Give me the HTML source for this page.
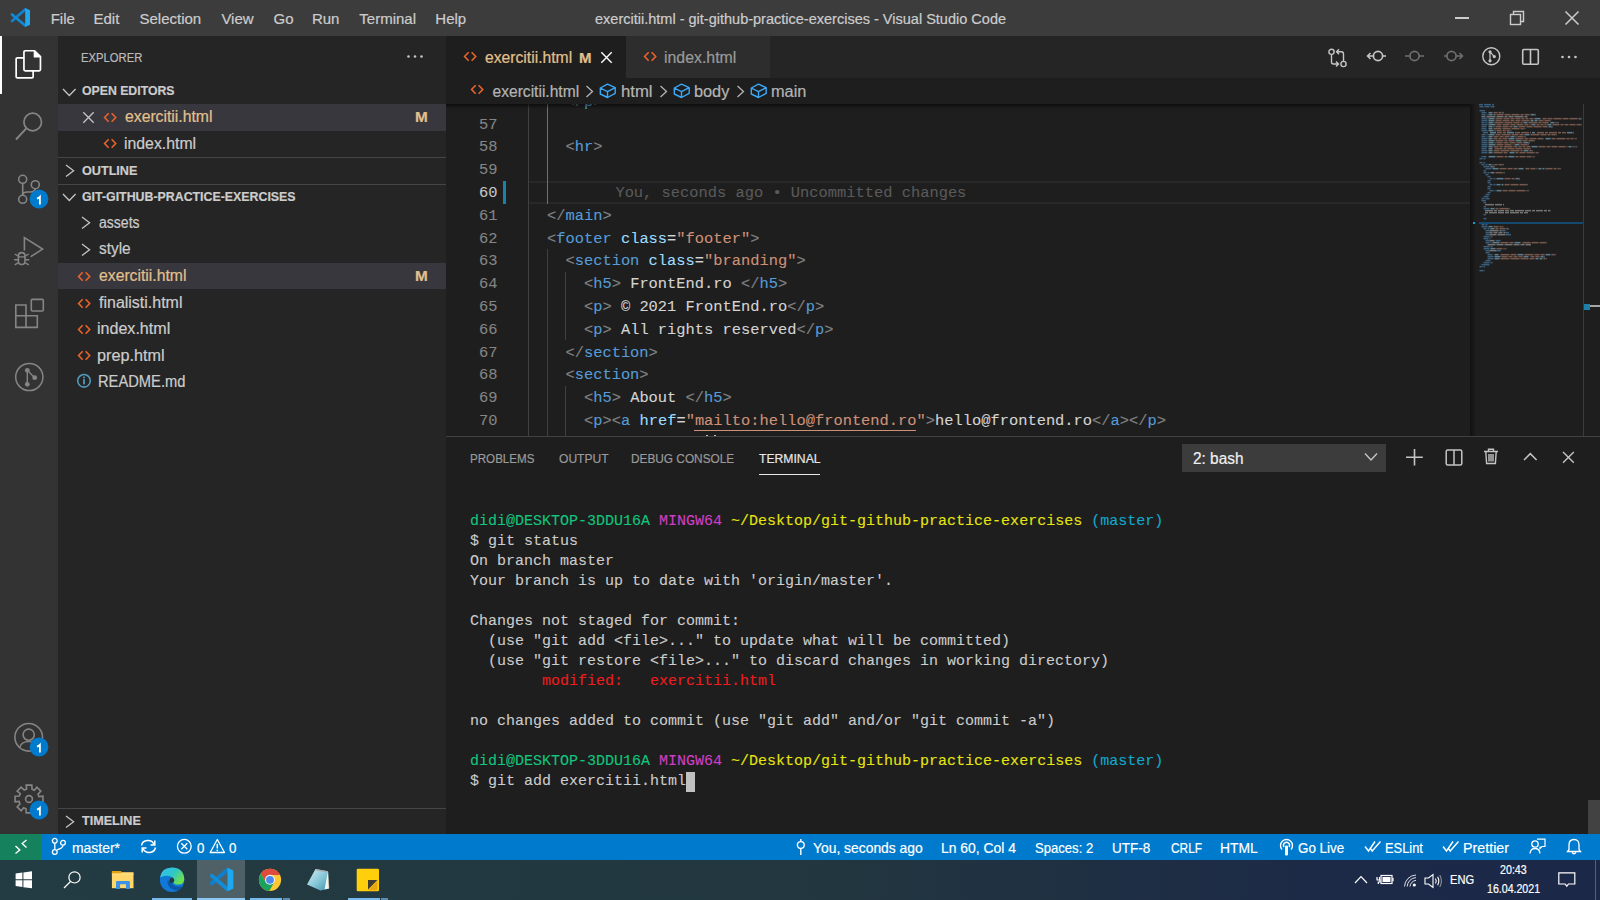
<!DOCTYPE html>
<html><head><meta charset="utf-8"><title>VS Code</title><style>
*{margin:0;padding:0;box-sizing:content-box}
html,body{width:1600px;height:900px;overflow:hidden;background:#1e1e1e}
.r,.t,.s,.cl,.tl,.clip{position:absolute}
.t{white-space:pre;-webkit-text-stroke:0.2px currentColor}
.clip{overflow:hidden}
.cl{font:400 15.4px/15.4px "Liberation Mono",monospace;white-space:pre;color:#d4d4d4;-webkit-text-stroke:0.1px currentColor}
.tl{font:400 15px/15px "Liberation Mono",monospace;white-space:pre;color:#cccccc;-webkit-text-stroke:0.1px currentColor}
svg.s{overflow:visible}
</style></head>
<body>
<div class="r" style="left:0px;top:0px;width:1600px;height:36px;background:#3c3c3c;"></div>
<svg class="s" style="left:5px;top:3px;" width="32" height="30" viewBox="0 0 32 30">
<path d="M7 18 L20.2 6.5" stroke="#1183d0" stroke-width="2.7" stroke-linecap="round"/>
<path d="M7 11.5 L20.2 22.5" stroke="#0e8ad8" stroke-width="2.7" stroke-linecap="round"/>
<path d="M20.2 5 L25 7.2 L25 21.8 L20.2 24 Z" fill="#1ea8f0"/>
</svg>
<div class="r" style="left:1455px;top:17px;width:14px;height:1.5px;background:#cccccc;"></div>
<svg class="s" style="left:1509px;top:10px;" width="17" height="16" viewBox="0 0 17 16"><rect x="1.5" y="4.5" width="10" height="10" fill="none" stroke="#cccccc" stroke-width="1.4"/><path d="M4.5 4.5 V1.5 H14.5 V11.5 H11.5" fill="none" stroke="#cccccc" stroke-width="1.4"/></svg>
<svg class="s" style="left:1564px;top:10px;" width="16" height="16" viewBox="0 0 16 16"><path d="M1.5 1.5 L14.5 14.5 M14.5 1.5 L1.5 14.5" stroke="#cccccc" stroke-width="1.5"/></svg>
<div class="r" style="left:0px;top:36px;width:58px;height:798px;background:#333333;"></div>
<div class="r" style="left:0px;top:36px;width:2px;height:58px;background:#ffffff;"></div>
<svg class="s" style="left:13px;top:48px;" width="32" height="34" viewBox="0 0 32 34">
<path d="M10.95 9.85 H4.4 Q3.15 9.85 3.15 11.1 V28.7 Q3.15 29.95 4.4 29.95 H18.9 Q20.15 29.95 20.15 28.7 V22.85" fill="none" stroke="#ffffff" stroke-width="1.7"/>
<path d="M12.2 2.75 H21.5 L27.45 8.7 V21.6 Q27.45 22.85 26.2 22.85 H12.2 Q10.95 22.85 10.95 21.6 V4 Q10.95 2.75 12.2 2.75 Z" fill="none" stroke="#ffffff" stroke-width="1.7"/>
<path d="M21.3 2.75 V8.9 H27.45 Z" fill="#ffffff" stroke="#ffffff" stroke-width="1.2" stroke-linejoin="round"/>
</svg>
<svg class="s" style="left:13px;top:108px;" width="34" height="36" viewBox="0 0 34 36"><circle cx="19.7" cy="14" r="8.8" fill="none" stroke="#858585" stroke-width="1.7"/>
<path d="M13.3 20.3 L3 31.5" stroke="#858585" stroke-width="1.9"/></svg>
<svg class="s" style="left:14px;top:170px;" width="36" height="40" viewBox="0 0 36 40"><circle cx="8.7" cy="9.3" r="4" fill="none" stroke="#858585" stroke-width="1.6"/>
<circle cx="21.3" cy="14.7" r="4" fill="none" stroke="#858585" stroke-width="1.6"/>
<circle cx="8.7" cy="29.3" r="4" fill="none" stroke="#858585" stroke-width="1.6"/>
<path d="M8.7 13.3 V25.3 M8.7 25 Q9.2 22 13 22 H16.5 Q20.5 22 21.3 18.7" fill="none" stroke="#858585" stroke-width="1.6"/></svg>
<svg class="s" style="left:28.700000000000003px;top:189.3px;" width="20" height="20" viewBox="0 0 20 20"><circle cx="10" cy="10" r="9.4" fill="#007acc"/><path d="M8 9.7 Q9.9 9 10.9 7.9 V15.4" fill="none" stroke="#ffffff" stroke-width="1.8"/></svg>
<svg class="s" style="left:12px;top:234px;" width="36" height="34" viewBox="0 0 36 34"><path d="M12.4 16.4 V3.6 L30.6 15.1 L18.7 22.7" fill="none" stroke="#858585" stroke-width="1.6" stroke-linejoin="miter"/>
<rect x="6.4" y="18.6" width="6.6" height="11.9" rx="3.3" fill="none" stroke="#858585" stroke-width="1.6"/>
<path d="M6.4 22.9 H13 M2.7 20 L6 21.9 M16.7 20 L13.4 21.9 M2.2 25.8 H6 M17.2 25.8 H13.4 M2.7 30.8 L6 28.9 M16.7 30.8 L13.4 28.9" stroke="#858585" stroke-width="1.4"/></svg>
<svg class="s" style="left:12px;top:296px;" width="36" height="36" viewBox="0 0 36 36"><path d="M3.8 9 H14 V19.7 H3.8 Z M3.8 19.7 H14 V31.4 H3.8 Z M14 19.7 H25.3 V31.4 H14 Z" fill="none" stroke="#858585" stroke-width="1.6"/>
<rect x="19.3" y="3.4" width="12" height="11.6" rx="1" fill="none" stroke="#858585" stroke-width="1.6"/></svg>
<svg class="s" style="left:13px;top:361px;" width="32" height="32" viewBox="0 0 32 32"><circle cx="16.3" cy="16" r="13.6" fill="none" stroke="#858585" stroke-width="1.5"/>
<circle cx="14.3" cy="9.3" r="2.4" fill="#858585"/><circle cx="21.7" cy="16.7" r="2.4" fill="#858585"/><circle cx="14.3" cy="23.3" r="2.4" fill="#858585"/>
<path d="M14.3 9.3 V23.3 M14.3 9.3 L21.7 16.7" stroke="#858585" stroke-width="1.4"/></svg>
<svg class="s" style="left:13px;top:721px;" width="32" height="32" viewBox="0 0 32 32"><circle cx="15.7" cy="16.3" r="13.8" fill="none" stroke="#858585" stroke-width="1.6"/>
<circle cx="15.7" cy="13.7" r="5.6" fill="none" stroke="#858585" stroke-width="1.6"/>
<path d="M6.5 26.5 Q8.5 20.5 15.7 20.5 Q22.9 20.5 24.9 26.5" fill="none" stroke="#858585" stroke-width="1.6"/></svg>
<svg class="s" style="left:28.700000000000003px;top:737.3px;" width="20" height="20" viewBox="0 0 20 20"><circle cx="10" cy="10" r="9.4" fill="#007acc"/><path d="M8 9.7 Q9.9 9 10.9 7.9 V15.4" fill="none" stroke="#ffffff" stroke-width="1.8"/></svg>
<svg class="s" style="left:12.7px;top:783.3px;" width="32" height="32" viewBox="0 0 32 32"><path d="M29.92 13.18 L29.92 18.82 L25.74 19.01 L24.70 21.33 L27.84 23.85 L23.85 27.84 L20.76 25.02 L18.38 25.92 L18.82 29.92 L13.18 29.92 L12.99 25.74 L10.67 24.70 L8.15 27.84 L4.16 23.85 L6.98 20.76 L6.08 18.38 L2.08 18.82 L2.08 13.18 L6.26 12.99 L7.30 10.67 L4.16 8.15 L8.15 4.16 L11.24 6.98 L13.62 6.08 L13.18 2.08 L18.82 2.08 L19.01 6.26 L21.33 7.30 L23.85 4.16 L27.84 8.15 L25.02 11.24 L25.92 13.62Z" fill="none" stroke="#858585" stroke-width="1.6"/><circle cx="16" cy="16" r="3.4" fill="none" stroke="#858585" stroke-width="1.6"/></svg>
<svg class="s" style="left:28.700000000000003px;top:800px;" width="20" height="20" viewBox="0 0 20 20"><circle cx="10" cy="10" r="9.4" fill="#007acc"/><path d="M8 9.7 Q9.9 9 10.9 7.9 V15.4" fill="none" stroke="#ffffff" stroke-width="1.8"/></svg>
<div class="r" style="left:58px;top:36px;width:388px;height:798px;background:#252526;"></div>
<svg class="s" style="left:405px;top:54px;" width="20" height="6" viewBox="0 0 20 6"><circle cx="3.5" cy="2.5" r="1.3" fill="#c5c5c5"/><circle cx="10" cy="2.5" r="1.3" fill="#c5c5c5"/><circle cx="16.5" cy="2.5" r="1.3" fill="#c5c5c5"/></svg>
<svg class="s" style="left:62px;top:87.5px;" width="14.6" height="8.5" viewBox="0 0 14.6 8.5"><path d="M1 1 L7.30 7.50 L13.60 1" fill="none" stroke="#c5c5c5" stroke-width="1.3"/></svg>
<div class="r" style="left:58px;top:104.2px;width:388px;height:26.4px;background:#37373d;"></div>
<svg class="s" style="left:82px;top:110.5px;" width="13" height="13" viewBox="0 0 13 13"><path d="M1.3 1.3 L11.7 11.7 M11.7 1.3 L1.3 11.7" stroke="#c5c5c5" stroke-width="1.3"/></svg>
<svg class="s" style="left:102.8px;top:111.8px;" width="14.3" height="11" viewBox="0 0 14.3 11"><path d="M5.67 1.3 L1.6 5.50 L5.67 9.70 M8.63 1.3 L12.70 5.50 L8.63 9.70" fill="none" stroke="#e8632b" stroke-width="1.6"/></svg>
<svg class="s" style="left:102.8px;top:138.2px;" width="14.3" height="11" viewBox="0 0 14.3 11"><path d="M5.67 1.3 L1.6 5.50 L5.67 9.70 M8.63 1.3 L12.70 5.50 L8.63 9.70" fill="none" stroke="#e8632b" stroke-width="1.6"/></svg>
<div class="r" style="left:58px;top:157.2px;width:388px;height:1px;background:#454545;"></div>
<svg class="s" style="left:65px;top:164px;" width="9.6" height="13.5" viewBox="0 0 9.6 13.5"><path d="M1 1 L8.60 6.75 L1 12.50" fill="none" stroke="#c5c5c5" stroke-width="1.3"/></svg>
<div class="r" style="left:58px;top:183.8px;width:388px;height:1px;background:#454545;"></div>
<svg class="s" style="left:62px;top:193.4px;" width="14.6" height="8.5" viewBox="0 0 14.6 8.5"><path d="M1 1 L7.30 7.50 L13.60 1" fill="none" stroke="#c5c5c5" stroke-width="1.3"/></svg>
<div class="r" style="left:58px;top:263px;width:388px;height:26.2px;background:#37373d;"></div>
<svg class="s" style="left:81.4px;top:216.3px;" width="9.6" height="13.5" viewBox="0 0 9.6 13.5"><path d="M1 1 L8.60 6.75 L1 12.50" fill="none" stroke="#c5c5c5" stroke-width="1.3"/></svg>
<svg class="s" style="left:81.4px;top:242.7px;" width="9.6" height="13.5" viewBox="0 0 9.6 13.5"><path d="M1 1 L8.60 6.75 L1 12.50" fill="none" stroke="#c5c5c5" stroke-width="1.3"/></svg>
<svg class="s" style="left:76.6px;top:270.8px;" width="14.3" height="11" viewBox="0 0 14.3 11"><path d="M5.67 1.3 L1.6 5.50 L5.67 9.70 M8.63 1.3 L12.70 5.50 L8.63 9.70" fill="none" stroke="#e8632b" stroke-width="1.6"/></svg>
<svg class="s" style="left:76.6px;top:297.5px;" width="14.3" height="11" viewBox="0 0 14.3 11"><path d="M5.67 1.3 L1.6 5.50 L5.67 9.70 M8.63 1.3 L12.70 5.50 L8.63 9.70" fill="none" stroke="#e8632b" stroke-width="1.6"/></svg>
<svg class="s" style="left:76.6px;top:323.8px;" width="14.3" height="11" viewBox="0 0 14.3 11"><path d="M5.67 1.3 L1.6 5.50 L5.67 9.70 M8.63 1.3 L12.70 5.50 L8.63 9.70" fill="none" stroke="#e8632b" stroke-width="1.6"/></svg>
<svg class="s" style="left:76.6px;top:350.3px;" width="14.3" height="11" viewBox="0 0 14.3 11"><path d="M5.67 1.3 L1.6 5.50 L5.67 9.70 M8.63 1.3 L12.70 5.50 L8.63 9.70" fill="none" stroke="#e8632b" stroke-width="1.6"/></svg>
<svg class="s" style="left:75.5px;top:373.3px;" width="16" height="16" viewBox="0 0 16 16"><circle cx="8" cy="7.8" r="6.3" fill="none" stroke="#519aba" stroke-width="1.6"/><rect x="7.1" y="6.2" width="1.8" height="5.2" fill="#519aba"/><rect x="7.1" y="3.6" width="1.8" height="1.7" fill="#519aba"/></svg>
<div class="r" style="left:58px;top:808px;width:388px;height:1px;background:#454545;"></div>
<svg class="s" style="left:65px;top:814.6px;" width="9.6" height="13.5" viewBox="0 0 9.6 13.5"><path d="M1 1 L8.60 6.75 L1 12.50" fill="none" stroke="#c5c5c5" stroke-width="1.3"/></svg>
<div class="r" style="left:446px;top:36px;width:1154px;height:42px;background:#252526;"></div>
<div class="r" style="left:446px;top:36px;width:179.5px;height:42px;background:#1e1e1e;"></div>
<div class="r" style="left:625.5px;top:36px;width:144.5px;height:42px;background:#2d2d2d;"></div>
<svg class="s" style="left:463px;top:51.3px;" width="14.3" height="11" viewBox="0 0 14.3 11"><path d="M5.67 1.3 L1.6 5.50 L5.67 9.70 M8.63 1.3 L12.70 5.50 L8.63 9.70" fill="none" stroke="#e8632b" stroke-width="1.6"/></svg>
<svg class="s" style="left:599.5px;top:51px;" width="13" height="13" viewBox="0 0 13 13"><path d="M1.3 1.3 L11.7 11.7 M11.7 1.3 L1.3 11.7" stroke="#ffffff" stroke-width="1.4"/></svg>
<svg class="s" style="left:642.5px;top:51.3px;" width="14.3" height="11" viewBox="0 0 14.3 11"><path d="M5.67 1.3 L1.6 5.50 L5.67 9.70 M8.63 1.3 L12.70 5.50 L8.63 9.70" fill="none" stroke="#e8632b" stroke-width="1.6"/></svg>
<svg class="s" style="left:1327px;top:47px;" width="22" height="22" viewBox="0 0 22 22"><circle cx="4.5" cy="4.8" r="2.6" fill="none" stroke="#c5c5c5" stroke-width="1.4"/>
<circle cx="16.5" cy="17" r="2.6" fill="none" stroke="#c5c5c5" stroke-width="1.4"/>
<path d="M4.5 7.4 V15 Q4.5 17 6.5 17 H11 M9 14.5 L11.5 17 L9 19.5" fill="none" stroke="#c5c5c5" stroke-width="1.4"/>
<path d="M16.5 14.4 V7 Q16.5 4.8 14.5 4.8 H10 M12 2.3 L9.5 4.8 L12 7.3" fill="none" stroke="#c5c5c5" stroke-width="1.4"/></svg>
<svg class="s" style="left:1366px;top:47px;" width="22" height="18" viewBox="0 0 22 18"><circle cx="12" cy="9" r="4.6" fill="none" stroke="#c5c5c5" stroke-width="1.7"/><path d="M16.6 9 H20 M7.4 9 H1.5 M4.5 6 L1.5 9 L4.5 12" fill="none" stroke="#c5c5c5" stroke-width="1.5"/></svg>
<svg class="s" style="left:1404px;top:47px;" width="22" height="18" viewBox="0 0 22 18"><circle cx="10.5" cy="9" r="4.6" fill="none" stroke="#6f6f6f" stroke-width="1.7"/><path d="M15.1 9 H20 M5.9 9 H1" fill="none" stroke="#6f6f6f" stroke-width="1.5"/></svg>
<svg class="s" style="left:1443px;top:47px;" width="22" height="18" viewBox="0 0 22 18"><circle cx="8.5" cy="9" r="4.6" fill="none" stroke="#6f6f6f" stroke-width="1.7"/><path d="M13.1 9 H19.5 M3.9 9 H1 M16.5 6 L19.5 9 L16.5 12" fill="none" stroke="#6f6f6f" stroke-width="1.5"/></svg>
<svg class="s" style="left:1481px;top:46px;" width="21" height="21" viewBox="0 0 21 21"><circle cx="10.3" cy="10.3" r="8.5" fill="none" stroke="#c5c5c5" stroke-width="1.4"/>
<circle cx="9" cy="5.8" r="1.6" fill="#c5c5c5"/><circle cx="13.3" cy="10.6" r="1.6" fill="#c5c5c5"/><circle cx="9" cy="14.8" r="1.6" fill="#c5c5c5"/>
<path d="M9 5.8 V14.8 M9 5.8 L13.3 10.6" stroke="#c5c5c5" stroke-width="1.2"/></svg>
<svg class="s" style="left:1521px;top:48px;" width="19" height="18" viewBox="0 0 19 18"><rect x="1.7" y="1.5" width="15.6" height="14.8" rx="1.2" fill="none" stroke="#c5c5c5" stroke-width="1.6"/><path d="M9.5 1.5 V16.3" stroke="#c5c5c5" stroke-width="1.6"/></svg>
<svg class="s" style="left:1559px;top:54px;" width="20" height="6" viewBox="0 0 20 6"><circle cx="3.5" cy="3" r="1.3" fill="#c5c5c5"/><circle cx="10" cy="3" r="1.3" fill="#c5c5c5"/><circle cx="16.5" cy="3" r="1.3" fill="#c5c5c5"/></svg>
<div class="r" style="left:446px;top:78px;width:1154px;height:26px;background:#1e1e1e;"></div>
<svg class="s" style="left:469.8px;top:84.3px;" width="14.3" height="11" viewBox="0 0 14.3 11"><path d="M5.67 1.3 L1.6 5.50 L5.67 9.70 M8.63 1.3 L12.70 5.50 L8.63 9.70" fill="none" stroke="#e8632b" stroke-width="1.6"/></svg>
<svg class="s" style="left:585px;top:84.8px;" width="10" height="13" viewBox="0 0 10 13"><path d="M1.5 1 L7.5 6.5 L1.5 12" fill="none" stroke="#b4b4b4" stroke-width="1.3"/></svg>
<svg class="s" style="left:599px;top:82.5px;" width="18" height="16" viewBox="0 0 18 16"><path d="M8.5 1.2 L16.2 4.6 L16.2 10.4 L8.5 14.5 L1.3 11 L1.3 5 Z M1.3 5 L8.5 8.7 L16.2 4.6 M8.5 8.7 V14.5" fill="none" stroke="#3aa8f8" stroke-width="1.4" stroke-linejoin="round"/></svg>
<svg class="s" style="left:659px;top:84.8px;" width="10" height="13" viewBox="0 0 10 13"><path d="M1.5 1 L7.5 6.5 L1.5 12" fill="none" stroke="#b4b4b4" stroke-width="1.3"/></svg>
<svg class="s" style="left:672.5px;top:82.5px;" width="18" height="16" viewBox="0 0 18 16"><path d="M8.5 1.2 L16.2 4.6 L16.2 10.4 L8.5 14.5 L1.3 11 L1.3 5 Z M1.3 5 L8.5 8.7 L16.2 4.6 M8.5 8.7 V14.5" fill="none" stroke="#3aa8f8" stroke-width="1.4" stroke-linejoin="round"/></svg>
<svg class="s" style="left:736px;top:84.8px;" width="10" height="13" viewBox="0 0 10 13"><path d="M1.5 1 L7.5 6.5 L1.5 12" fill="none" stroke="#b4b4b4" stroke-width="1.3"/></svg>
<svg class="s" style="left:749.5px;top:82.5px;" width="18" height="16" viewBox="0 0 18 16"><path d="M8.5 1.2 L16.2 4.6 L16.2 10.4 L8.5 14.5 L1.3 11 L1.3 5 Z M1.3 5 L8.5 8.7 L16.2 4.6 M8.5 8.7 V14.5" fill="none" stroke="#3aa8f8" stroke-width="1.4" stroke-linejoin="round"/></svg>
<div class="r" style="left:446px;top:104px;width:1137px;height:332px;background:#1e1e1e;"></div>
<div class="r" style="left:528.5px;top:180.8px;width:941.5px;height:22.8px;background:transparent;box-sizing:border-box;border-top:2px solid #282828;border-bottom:2px solid #282828;"></div>
<div class="r" style="left:528.0px;top:104px;width:1px;height:332px;background:#404040;"></div>
<div class="r" style="left:546.5px;top:104px;width:1px;height:99.6px;background:#707070;"></div>
<div class="r" style="left:546.5px;top:249.20000000000002px;width:1px;height:186.8px;background:#404040;"></div>
<div class="r" style="left:565.0px;top:272.0px;width:1px;height:68.4px;background:#404040;"></div>
<div class="r" style="left:565.0px;top:386.0px;width:1px;height:50.0px;background:#404040;"></div>
<div class="r" style="left:503px;top:180.8px;width:3.3px;height:22.8px;background:#1b81a8;"></div>
<div class="clip" style="left:446px;top:104px;width:1024px;height:332px;"><div style="position:absolute;left:-446px;top:-104px;width:1600px;height:900px"><div class="cl" style="left:528.5px;top:94.70px"><span style="color:#d4d4d4">    </span><span style="color:#808080">&lt;/</span><span style="color:#569cd6">p</span><span style="color:#808080">&gt;</span></div>
<div class="cl" style="left:479.12px;top:117.50px;color:#858585">57</div>
<div class="cl" style="left:479.12px;top:140.30px;color:#858585">58</div>
<div class="cl" style="left:528.5px;top:140.30px"><span style="color:#d4d4d4">    </span><span style="color:#808080">&lt;</span><span style="color:#569cd6">hr</span><span style="color:#808080">&gt;</span></div>
<div class="cl" style="left:479.12px;top:163.10px;color:#858585">59</div>
<div class="cl" style="left:479.12px;top:185.90px;color:#c6c6c6">60</div>
<div class="cl" style="left:479.12px;top:208.70px;color:#858585">61</div>
<div class="cl" style="left:528.5px;top:208.70px"><span style="color:#d4d4d4">  </span><span style="color:#808080">&lt;/</span><span style="color:#569cd6">main</span><span style="color:#808080">&gt;</span></div>
<div class="cl" style="left:479.12px;top:231.50px;color:#858585">62</div>
<div class="cl" style="left:528.5px;top:231.50px"><span style="color:#d4d4d4">  </span><span style="color:#808080">&lt;</span><span style="color:#569cd6">footer</span><span style="color:#d4d4d4"> </span><span style="color:#9cdcfe">class</span><span style="color:#d4d4d4">=</span><span style="color:#ce9178">&quot;footer&quot;</span><span style="color:#808080">&gt;</span></div>
<div class="cl" style="left:479.12px;top:254.30px;color:#858585">63</div>
<div class="cl" style="left:528.5px;top:254.30px"><span style="color:#d4d4d4">    </span><span style="color:#808080">&lt;</span><span style="color:#569cd6">section</span><span style="color:#d4d4d4"> </span><span style="color:#9cdcfe">class</span><span style="color:#d4d4d4">=</span><span style="color:#ce9178">&quot;branding&quot;</span><span style="color:#808080">&gt;</span></div>
<div class="cl" style="left:479.12px;top:277.10px;color:#858585">64</div>
<div class="cl" style="left:528.5px;top:277.10px"><span style="color:#d4d4d4">      </span><span style="color:#808080">&lt;</span><span style="color:#569cd6">h5</span><span style="color:#808080">&gt;</span><span style="color:#d4d4d4"> FrontEnd.ro </span><span style="color:#808080">&lt;/</span><span style="color:#569cd6">h5</span><span style="color:#808080">&gt;</span></div>
<div class="cl" style="left:479.12px;top:299.90px;color:#858585">65</div>
<div class="cl" style="left:528.5px;top:299.90px"><span style="color:#d4d4d4">      </span><span style="color:#808080">&lt;</span><span style="color:#569cd6">p</span><span style="color:#808080">&gt;</span><span style="color:#d4d4d4"> © 2021 FrontEnd.ro</span><span style="color:#808080">&lt;/</span><span style="color:#569cd6">p</span><span style="color:#808080">&gt;</span></div>
<div class="cl" style="left:479.12px;top:322.70px;color:#858585">66</div>
<div class="cl" style="left:528.5px;top:322.70px"><span style="color:#d4d4d4">      </span><span style="color:#808080">&lt;</span><span style="color:#569cd6">p</span><span style="color:#808080">&gt;</span><span style="color:#d4d4d4"> All rights reserved</span><span style="color:#808080">&lt;/</span><span style="color:#569cd6">p</span><span style="color:#808080">&gt;</span></div>
<div class="cl" style="left:479.12px;top:345.50px;color:#858585">67</div>
<div class="cl" style="left:528.5px;top:345.50px"><span style="color:#d4d4d4">    </span><span style="color:#808080">&lt;/</span><span style="color:#569cd6">section</span><span style="color:#808080">&gt;</span></div>
<div class="cl" style="left:479.12px;top:368.30px;color:#858585">68</div>
<div class="cl" style="left:528.5px;top:368.30px"><span style="color:#d4d4d4">    </span><span style="color:#808080">&lt;</span><span style="color:#569cd6">section</span><span style="color:#808080">&gt;</span></div>
<div class="cl" style="left:479.12px;top:391.10px;color:#858585">69</div>
<div class="cl" style="left:528.5px;top:391.10px"><span style="color:#d4d4d4">      </span><span style="color:#808080">&lt;</span><span style="color:#569cd6">h5</span><span style="color:#808080">&gt;</span><span style="color:#d4d4d4"> About </span><span style="color:#808080">&lt;/</span><span style="color:#569cd6">h5</span><span style="color:#808080">&gt;</span></div>
<div class="cl" style="left:479.12px;top:413.90px;color:#858585">70</div>
<div class="cl" style="left:528.5px;top:413.90px"><span style="color:#d4d4d4">      </span><span style="color:#808080">&lt;</span><span style="color:#569cd6">p</span><span style="color:#808080">&gt;</span><span style="color:#808080">&lt;</span><span style="color:#569cd6">a</span><span style="color:#d4d4d4"> </span><span style="color:#9cdcfe">href</span><span style="color:#d4d4d4">=</span><span style="color:#ce9178">&quot;</span><span style="color:#ce9178">mailto:hello@frontend.ro</span><span style="color:#ce9178">&quot;</span><span style="color:#808080">&gt;</span><span style="color:#d4d4d4">hello@frontend.ro</span><span style="color:#808080">&lt;/</span><span style="color:#569cd6">a</span><span style="color:#808080">&gt;</span><span style="color:#808080">&lt;/</span><span style="color:#569cd6">p</span><span style="color:#808080">&gt;</span></div>
<div class="cl" style="left:479.12px;top:436.70px;color:#858585">71</div>
<div class="cl" style="left:615.4px;top:185.90px;color:#5a5a5a">You, seconds ago • Uncommitted changes</div><div class="r" style="left:693.8px;top:430px;width:222.2px;height:1px;background:#ce9178"></div><div class="r" style="left:706px;top:434.5px;width:1.6px;height:2px;background:#bdbdbd"></div><div class="r" style="left:714px;top:434.5px;width:1.6px;height:2px;background:#bdbdbd"></div></div></div>
<div class="r" style="left:446px;top:104px;width:1137px;height:5px;background:linear-gradient(rgba(0,0,0,0.55),rgba(0,0,0,0));"></div>
<div class="r" style="left:1470px;top:104px;width:113px;height:332px;background:#1e1e1e;"></div>
<div class="r" style="left:1470px;top:104px;width:6px;height:332px;background:linear-gradient(90deg,rgba(0,0,0,0.45),rgba(0,0,0,0));"></div>
<div class="r" style="left:1478.5px;top:221.8px;width:104.5px;height:2px;background:#124a70;"></div>
<svg class="s" style="left:1470px;top:104px" width="113" height="180" viewBox="0 0 113 180"><g opacity="0.5"><rect x="9.0" y="-0.1" width="4.0" height="1.5" fill="#569cd6"/><rect x="14.0" y="-0.1" width="7.0" height="1.5" fill="#569cd6"/><rect x="22.0" y="-0.1" width="2.0" height="1.5" fill="#569cd6"/><rect x="9.5" y="1.9" width="4.0" height="1.5" fill="#569cd6"/><rect x="14.5" y="1.9" width="5.0" height="1.5" fill="#569cd6"/><rect x="20.5" y="1.9" width="4.0" height="1.5" fill="#569cd6"/><rect x="9.5" y="5.9" width="5.5" height="1.5" fill="#569cd6"/><rect x="11.5" y="7.9" width="5.0" height="1.5" fill="#569cd6"/><rect x="18.5" y="7.9" width="4.0" height="1.5" fill="#9cdcfe"/><rect x="23.5" y="7.9" width="4.0" height="1.5" fill="#ce9178"/><rect x="28.5" y="7.9" width="3.0" height="1.5" fill="#ce9178"/><rect x="32.5" y="7.9" width="1.5" height="1.5" fill="#9cdcfe"/><rect x="32.0" y="7.9" width="2.0" height="1.5" fill="#808080"/><rect x="11.5" y="9.9" width="4.0" height="1.5" fill="#569cd6"/><rect x="16.5" y="9.9" width="1.0" height="1.5" fill="#569cd6"/><rect x="18.5" y="9.9" width="4.0" height="1.5" fill="#9cdcfe"/><rect x="23.5" y="9.9" width="2.0" height="1.5" fill="#9cdcfe"/><rect x="26.5" y="9.9" width="7.0" height="1.5" fill="#ce9178"/><rect x="34.5" y="9.9" width="6.0" height="1.5" fill="#ce9178"/><rect x="41.5" y="9.9" width="8.0" height="1.5" fill="#ce9178"/><rect x="50.5" y="9.9" width="3.0" height="1.5" fill="#ce9178"/><rect x="54.5" y="9.9" width="5.0" height="1.5" fill="#ce9178"/><rect x="60.5" y="9.9" width="5.0" height="1.5" fill="#9cdcfe"/><rect x="64.0" y="9.9" width="2.0" height="1.5" fill="#808080"/><rect x="11.5" y="11.9" width="4.0" height="1.5" fill="#c8c8c8"/><rect x="16.5" y="11.9" width="9.0" height="1.5" fill="#c8c8c8"/><rect x="26.5" y="11.9" width="7.0" height="1.5" fill="#c8c8c8"/><rect x="34.5" y="11.9" width="3.0" height="1.5" fill="#c8c8c8"/><rect x="38.5" y="11.9" width="5.0" height="1.5" fill="#c8c8c8"/><rect x="44.5" y="11.9" width="9.0" height="1.5" fill="#c8c8c8"/><rect x="54.5" y="11.9" width="3.0" height="1.5" fill="#c8c8c8"/><rect x="11.5" y="13.9" width="6.0" height="1.5" fill="#569cd6"/><rect x="18.5" y="13.9" width="6.0" height="1.5" fill="#9cdcfe"/><rect x="25.5" y="13.9" width="7.0" height="1.5" fill="#ce9178"/><rect x="33.5" y="13.9" width="6.0" height="1.5" fill="#ce9178"/><rect x="40.5" y="13.9" width="4.0" height="1.5" fill="#ce9178"/><rect x="45.5" y="13.9" width="5.0" height="1.5" fill="#ce9178"/><rect x="51.5" y="13.9" width="3.0" height="1.5" fill="#ce9178"/><rect x="55.5" y="13.9" width="3.0" height="1.5" fill="#ce9178"/><rect x="59.5" y="13.9" width="4.0" height="1.5" fill="#ce9178"/><rect x="64.5" y="13.9" width="6.0" height="1.5" fill="#9cdcfe"/><rect x="72.5" y="13.9" width="4.0" height="1.5" fill="#ce9178"/><rect x="77.5" y="13.9" width="5.0" height="1.5" fill="#ce9178"/><rect x="83.5" y="13.9" width="8.0" height="1.5" fill="#ce9178"/><rect x="92.5" y="13.9" width="6.0" height="1.5" fill="#ce9178"/><rect x="99.5" y="13.9" width="8.0" height="1.5" fill="#ce9178"/><rect x="108.5" y="13.9" width="3.0" height="1.5" fill="#9cdcfe"/><rect x="109.5" y="13.9" width="2.0" height="1.5" fill="#808080"/><rect x="11.5" y="15.9" width="6.0" height="1.5" fill="#569cd6"/><rect x="18.5" y="15.9" width="6.0" height="1.5" fill="#9cdcfe"/><rect x="25.5" y="15.9" width="6.0" height="1.5" fill="#ce9178"/><rect x="32.5" y="15.9" width="7.0" height="1.5" fill="#ce9178"/><rect x="40.5" y="15.9" width="4.0" height="1.5" fill="#ce9178"/><rect x="45.5" y="15.9" width="5.0" height="1.5" fill="#ce9178"/><rect x="51.5" y="15.9" width="8.0" height="1.5" fill="#ce9178"/><rect x="60.5" y="15.9" width="3.0" height="1.5" fill="#9cdcfe"/><rect x="64.5" y="15.9" width="3.0" height="1.5" fill="#9cdcfe"/><rect x="68.5" y="15.9" width="5.0" height="1.5" fill="#ce9178"/><rect x="74.5" y="15.9" width="4.5" height="1.5" fill="#ce9178"/><rect x="79.0" y="15.9" width="2.0" height="1.5" fill="#808080"/><rect x="11.5" y="17.9" width="3.0" height="1.5" fill="#569cd6"/><rect x="15.5" y="17.9" width="2.0" height="1.5" fill="#569cd6"/><rect x="18.5" y="17.9" width="5.0" height="1.5" fill="#9cdcfe"/><rect x="24.5" y="17.9" width="9.0" height="1.5" fill="#ce9178"/><rect x="34.5" y="17.9" width="8.0" height="1.5" fill="#ce9178"/><rect x="43.5" y="17.9" width="6.0" height="1.5" fill="#ce9178"/><rect x="50.5" y="17.9" width="2.0" height="1.5" fill="#ce9178"/><rect x="53.5" y="17.9" width="4.0" height="1.5" fill="#9cdcfe"/><rect x="58.5" y="17.9" width="9.0" height="1.5" fill="#ce9178"/><rect x="68.5" y="17.9" width="3.0" height="1.5" fill="#ce9178"/><rect x="72.5" y="17.9" width="6.0" height="1.5" fill="#ce9178"/><rect x="80.5" y="17.9" width="4.0" height="1.5" fill="#9cdcfe"/><rect x="85.5" y="17.9" width="1.0" height="1.5" fill="#9cdcfe"/><rect x="87.0" y="17.9" width="2.0" height="1.5" fill="#808080"/><rect x="11.5" y="19.9" width="6.0" height="1.5" fill="#569cd6"/><rect x="18.5" y="19.9" width="7.0" height="1.5" fill="#9cdcfe"/><rect x="26.5" y="19.9" width="5.0" height="1.5" fill="#ce9178"/><rect x="32.5" y="19.9" width="7.0" height="1.5" fill="#ce9178"/><rect x="40.5" y="19.9" width="5.0" height="1.5" fill="#ce9178"/><rect x="46.5" y="19.9" width="7.0" height="1.5" fill="#ce9178"/><rect x="54.5" y="19.9" width="4.0" height="1.5" fill="#ce9178"/><rect x="59.5" y="19.9" width="1.0" height="1.5" fill="#ce9178"/><rect x="61.5" y="19.9" width="4.0" height="1.5" fill="#9cdcfe"/><rect x="66.5" y="19.9" width="3.0" height="1.5" fill="#ce9178"/><rect x="70.5" y="19.9" width="3.0" height="1.5" fill="#ce9178"/><rect x="74.5" y="19.9" width="2.0" height="1.5" fill="#ce9178"/><rect x="77.5" y="19.9" width="4.0" height="1.5" fill="#9cdcfe"/><rect x="82.5" y="19.9" width="7.0" height="1.5" fill="#ce9178"/><rect x="90.5" y="19.9" width="3.0" height="1.5" fill="#ce9178"/><rect x="94.5" y="19.9" width="4.0" height="1.5" fill="#ce9178"/><rect x="99.5" y="19.9" width="6.0" height="1.5" fill="#ce9178"/><rect x="106.5" y="19.9" width="3.5" height="1.5" fill="#ce9178"/><rect x="110.0" y="19.9" width="2.0" height="1.5" fill="#808080"/><rect x="11.5" y="21.9" width="5.0" height="1.5" fill="#569cd6"/><rect x="18.5" y="21.9" width="4.0" height="1.5" fill="#9cdcfe"/><rect x="23.5" y="21.9" width="1.0" height="1.5" fill="#9cdcfe"/><rect x="25.5" y="21.9" width="6.0" height="1.5" fill="#ce9178"/><rect x="32.5" y="21.9" width="6.0" height="1.5" fill="#ce9178"/><rect x="39.5" y="21.9" width="3.0" height="1.5" fill="#ce9178"/><rect x="43.5" y="21.9" width="4.0" height="1.5" fill="#9cdcfe"/><rect x="48.5" y="21.9" width="7.0" height="1.5" fill="#ce9178"/><rect x="56.5" y="21.9" width="6.0" height="1.5" fill="#ce9178"/><rect x="63.5" y="21.9" width="8.0" height="1.5" fill="#ce9178"/><rect x="72.5" y="21.9" width="5.0" height="1.5" fill="#ce9178"/><rect x="78.5" y="21.9" width="4.0" height="1.5" fill="#9cdcfe"/><rect x="80.5" y="21.9" width="2.0" height="1.5" fill="#808080"/><rect x="11.5" y="23.9" width="5.0" height="1.5" fill="#569cd6"/><rect x="18.5" y="23.9" width="4.0" height="1.5" fill="#9cdcfe"/><rect x="23.5" y="23.9" width="8.0" height="1.5" fill="#ce9178"/><rect x="32.5" y="23.9" width="8.0" height="1.5" fill="#ce9178"/><rect x="41.5" y="23.9" width="8.0" height="1.5" fill="#ce9178"/><rect x="50.5" y="23.9" width="3.0" height="1.5" fill="#ce9178"/><rect x="53.5" y="23.9" width="2.0" height="1.5" fill="#808080"/><rect x="11.5" y="25.9" width="6.0" height="1.5" fill="#569cd6"/><rect x="18.5" y="25.9" width="5.0" height="1.5" fill="#9cdcfe"/><rect x="24.5" y="25.9" width="1.0" height="1.5" fill="#9cdcfe"/><rect x="26.5" y="25.9" width="5.0" height="1.5" fill="#ce9178"/><rect x="32.5" y="25.9" width="3.0" height="1.5" fill="#ce9178"/><rect x="36.5" y="25.9" width="3.0" height="1.5" fill="#ce9178"/><rect x="39.5" y="25.9" width="2.0" height="1.5" fill="#808080"/><rect x="13.0" y="27.9" width="5.0" height="1.5" fill="#569cd6"/><rect x="20.0" y="27.9" width="6.0" height="1.5" fill="#9cdcfe"/><rect x="27.0" y="27.9" width="5.0" height="1.5" fill="#ce9178"/><rect x="33.0" y="27.9" width="3.0" height="1.5" fill="#ce9178"/><rect x="37.0" y="27.9" width="7.0" height="1.5" fill="#9cdcfe"/><rect x="45.0" y="27.9" width="5.0" height="1.5" fill="#ce9178"/><rect x="51.0" y="27.9" width="8.0" height="1.5" fill="#ce9178"/><rect x="60.0" y="27.9" width="1.0" height="1.5" fill="#ce9178"/><rect x="62.0" y="27.9" width="3.0" height="1.5" fill="#9cdcfe"/><rect x="67.0" y="27.9" width="7.0" height="1.5" fill="#ce9178"/><rect x="75.0" y="27.9" width="3.0" height="1.5" fill="#ce9178"/><rect x="79.0" y="27.9" width="8.0" height="1.5" fill="#ce9178"/><rect x="88.0" y="27.9" width="3.0" height="1.5" fill="#ce9178"/><rect x="92.0" y="27.9" width="4.0" height="1.5" fill="#ce9178"/><rect x="97.0" y="27.9" width="5.0" height="1.5" fill="#9cdcfe"/><rect x="103.0" y="27.9" width="1.0" height="1.5" fill="#9cdcfe"/><rect x="102.0" y="27.9" width="2.0" height="1.5" fill="#808080"/><rect x="11.5" y="29.9" width="4.0" height="1.5" fill="#569cd6"/><rect x="16.5" y="29.9" width="1.0" height="1.5" fill="#569cd6"/><rect x="18.5" y="29.9" width="6.0" height="1.5" fill="#9cdcfe"/><rect x="25.5" y="29.9" width="5.0" height="1.5" fill="#ce9178"/><rect x="31.5" y="29.9" width="9.0" height="1.5" fill="#ce9178"/><rect x="41.5" y="29.9" width="7.0" height="1.5" fill="#ce9178"/><rect x="49.5" y="29.9" width="4.0" height="1.5" fill="#ce9178"/><rect x="54.5" y="29.9" width="5.0" height="1.5" fill="#9cdcfe"/><rect x="60.5" y="29.9" width="9.0" height="1.5" fill="#ce9178"/><rect x="70.5" y="29.9" width="6.0" height="1.5" fill="#ce9178"/><rect x="77.5" y="29.9" width="3.0" height="1.5" fill="#ce9178"/><rect x="81.5" y="29.9" width="3.5" height="1.5" fill="#ce9178"/><rect x="85.0" y="29.9" width="2.0" height="1.5" fill="#808080"/><rect x="11.5" y="31.9" width="4.0" height="1.5" fill="#569cd6"/><rect x="16.5" y="31.9" width="1.0" height="1.5" fill="#569cd6"/><rect x="18.5" y="31.9" width="4.0" height="1.5" fill="#9cdcfe"/><rect x="23.5" y="31.9" width="5.0" height="1.5" fill="#ce9178"/><rect x="29.5" y="31.9" width="4.0" height="1.5" fill="#ce9178"/><rect x="34.5" y="31.9" width="5.0" height="1.5" fill="#ce9178"/><rect x="40.5" y="31.9" width="4.0" height="1.5" fill="#9cdcfe"/><rect x="45.5" y="31.9" width="1.0" height="1.5" fill="#9cdcfe"/><rect x="47.5" y="31.9" width="6.0" height="1.5" fill="#ce9178"/><rect x="54.0" y="31.9" width="2.0" height="1.5" fill="#808080"/><rect x="11.5" y="33.9" width="6.0" height="1.5" fill="#569cd6"/><rect x="18.5" y="33.9" width="4.0" height="1.5" fill="#9cdcfe"/><rect x="23.5" y="33.9" width="4.0" height="1.5" fill="#ce9178"/><rect x="28.5" y="33.9" width="3.0" height="1.5" fill="#ce9178"/><rect x="32.5" y="33.9" width="5.0" height="1.5" fill="#ce9178"/><rect x="38.5" y="33.9" width="6.0" height="1.5" fill="#9cdcfe"/><rect x="45.5" y="33.9" width="8.0" height="1.5" fill="#ce9178"/><rect x="54.5" y="33.9" width="4.0" height="1.5" fill="#ce9178"/><rect x="59.5" y="33.9" width="7.0" height="1.5" fill="#ce9178"/><rect x="67.5" y="33.9" width="6.0" height="1.5" fill="#ce9178"/><rect x="75.5" y="33.9" width="5.0" height="1.5" fill="#9cdcfe"/><rect x="81.5" y="33.9" width="4.0" height="1.5" fill="#ce9178"/><rect x="86.5" y="33.9" width="9.0" height="1.5" fill="#ce9178"/><rect x="96.5" y="33.9" width="3.0" height="1.5" fill="#ce9178"/><rect x="100.5" y="33.9" width="3.0" height="1.5" fill="#ce9178"/><rect x="104.5" y="33.9" width="0.5" height="1.5" fill="#ce9178"/><rect x="105.0" y="33.9" width="2.0" height="1.5" fill="#808080"/><rect x="11.5" y="35.9" width="6.0" height="1.5" fill="#569cd6"/><rect x="18.5" y="35.9" width="6.0" height="1.5" fill="#9cdcfe"/><rect x="25.5" y="35.9" width="8.0" height="1.5" fill="#ce9178"/><rect x="34.5" y="35.9" width="3.0" height="1.5" fill="#ce9178"/><rect x="38.5" y="35.9" width="6.0" height="1.5" fill="#ce9178"/><rect x="45.5" y="35.9" width="6.0" height="1.5" fill="#9cdcfe"/><rect x="52.5" y="35.9" width="5.0" height="1.5" fill="#ce9178"/><rect x="58.5" y="35.9" width="4.5" height="1.5" fill="#ce9178"/><rect x="63.0" y="35.9" width="2.0" height="1.5" fill="#808080"/><rect x="11.5" y="37.9" width="6.0" height="1.5" fill="#569cd6"/><rect x="18.5" y="37.9" width="5.0" height="1.5" fill="#9cdcfe"/><rect x="24.5" y="37.9" width="1.0" height="1.5" fill="#9cdcfe"/><rect x="26.5" y="37.9" width="6.0" height="1.5" fill="#ce9178"/><rect x="33.5" y="37.9" width="5.0" height="1.5" fill="#ce9178"/><rect x="39.5" y="37.9" width="6.0" height="1.5" fill="#ce9178"/><rect x="46.5" y="37.9" width="6.0" height="1.5" fill="#ce9178"/><rect x="53.5" y="37.9" width="6.0" height="1.5" fill="#9cdcfe"/><rect x="58.0" y="37.9" width="2.0" height="1.5" fill="#808080"/><rect x="11.5" y="39.9" width="6.0" height="1.5" fill="#569cd6"/><rect x="18.5" y="39.9" width="7.0" height="1.5" fill="#9cdcfe"/><rect x="26.5" y="39.9" width="7.0" height="1.5" fill="#ce9178"/><rect x="34.5" y="39.9" width="7.0" height="1.5" fill="#ce9178"/><rect x="42.5" y="39.9" width="1.0" height="1.5" fill="#ce9178"/><rect x="44.5" y="39.9" width="5.0" height="1.5" fill="#9cdcfe"/><rect x="50.5" y="39.9" width="6.5" height="1.5" fill="#ce9178"/><rect x="57.0" y="39.9" width="2.0" height="1.5" fill="#808080"/><rect x="11.5" y="41.9" width="6.0" height="1.5" fill="#569cd6"/><rect x="18.5" y="41.9" width="4.0" height="1.5" fill="#9cdcfe"/><rect x="23.5" y="41.9" width="5.0" height="1.5" fill="#ce9178"/><rect x="29.5" y="41.9" width="3.0" height="1.5" fill="#ce9178"/><rect x="33.5" y="41.9" width="9.0" height="1.5" fill="#ce9178"/><rect x="43.5" y="41.9" width="4.0" height="1.5" fill="#ce9178"/><rect x="48.5" y="41.9" width="3.0" height="1.5" fill="#ce9178"/><rect x="52.5" y="41.9" width="3.0" height="1.5" fill="#ce9178"/><rect x="56.5" y="41.9" width="4.0" height="1.5" fill="#ce9178"/><rect x="61.5" y="41.9" width="6.0" height="1.5" fill="#9cdcfe"/><rect x="68.5" y="41.9" width="7.0" height="1.5" fill="#ce9178"/><rect x="76.5" y="41.9" width="4.0" height="1.5" fill="#ce9178"/><rect x="81.5" y="41.9" width="6.0" height="1.5" fill="#ce9178"/><rect x="88.5" y="41.9" width="7.0" height="1.5" fill="#ce9178"/><rect x="96.5" y="41.9" width="1.0" height="1.5" fill="#ce9178"/><rect x="98.5" y="41.9" width="3.0" height="1.5" fill="#9cdcfe"/><rect x="102.5" y="41.9" width="1.0" height="1.5" fill="#9cdcfe"/><rect x="104.5" y="41.9" width="1.0" height="1.5" fill="#ce9178"/><rect x="105.5" y="41.9" width="2.0" height="1.5" fill="#808080"/><rect x="11.5" y="43.9" width="5.0" height="1.5" fill="#569cd6"/><rect x="18.5" y="43.9" width="4.0" height="1.5" fill="#9cdcfe"/><rect x="24.5" y="43.9" width="8.0" height="1.5" fill="#ce9178"/><rect x="33.5" y="43.9" width="3.0" height="1.5" fill="#ce9178"/><rect x="37.5" y="43.9" width="7.0" height="1.5" fill="#ce9178"/><rect x="45.5" y="43.9" width="7.0" height="1.5" fill="#ce9178"/><rect x="53.5" y="43.9" width="5.5" height="1.5" fill="#ce9178"/><rect x="59.0" y="43.9" width="2.0" height="1.5" fill="#808080"/><rect x="11.5" y="45.9" width="6.0" height="1.5" fill="#569cd6"/><rect x="18.5" y="45.9" width="4.0" height="1.5" fill="#9cdcfe"/><rect x="23.5" y="45.9" width="6.0" height="1.5" fill="#ce9178"/><rect x="30.5" y="45.9" width="9.0" height="1.5" fill="#ce9178"/><rect x="40.5" y="45.9" width="9.0" height="1.5" fill="#ce9178"/><rect x="50.5" y="45.9" width="2.0" height="1.5" fill="#ce9178"/><rect x="53.5" y="45.9" width="5.0" height="1.5" fill="#9cdcfe"/><rect x="59.5" y="45.9" width="1.5" height="1.5" fill="#ce9178"/><rect x="61.0" y="45.9" width="2.0" height="1.5" fill="#808080"/><rect x="11.5" y="47.9" width="6.0" height="1.5" fill="#569cd6"/><rect x="18.5" y="47.9" width="4.0" height="1.5" fill="#9cdcfe"/><rect x="23.5" y="47.9" width="9.0" height="1.5" fill="#ce9178"/><rect x="33.5" y="47.9" width="4.0" height="1.5" fill="#ce9178"/><rect x="39.5" y="47.9" width="5.0" height="1.5" fill="#9cdcfe"/><rect x="45.5" y="47.9" width="3.0" height="1.5" fill="#ce9178"/><rect x="49.5" y="47.9" width="6.0" height="1.5" fill="#ce9178"/><rect x="56.5" y="47.9" width="8.0" height="1.5" fill="#ce9178"/><rect x="65.5" y="47.9" width="1.5" height="1.5" fill="#ce9178"/><rect x="67.0" y="47.9" width="2.0" height="1.5" fill="#808080"/><rect x="11.5" y="51.9" width="5.0" height="1.5" fill="#569cd6"/><rect x="18.5" y="51.9" width="7.0" height="1.5" fill="#9cdcfe"/><rect x="26.5" y="51.9" width="7.0" height="1.5" fill="#ce9178"/><rect x="34.5" y="51.9" width="3.0" height="1.5" fill="#ce9178"/><rect x="38.5" y="51.9" width="6.0" height="1.5" fill="#9cdcfe"/><rect x="45.5" y="51.9" width="3.0" height="1.5" fill="#ce9178"/><rect x="49.5" y="51.9" width="6.0" height="1.5" fill="#ce9178"/><rect x="56.5" y="51.9" width="5.0" height="1.5" fill="#ce9178"/><rect x="62.5" y="51.9" width="0.5" height="1.5" fill="#ce9178"/><rect x="63.0" y="51.9" width="2.0" height="1.5" fill="#808080"/><rect x="9.5" y="53.9" width="3.0" height="1.5" fill="#569cd6"/><rect x="13.5" y="53.9" width="2.0" height="1.5" fill="#569cd6"/><rect x="9.5" y="57.9" width="3.0" height="1.5" fill="#569cd6"/><rect x="13.5" y="57.9" width="1.5" height="1.5" fill="#569cd6"/><rect x="11.5" y="59.9" width="3.0" height="1.5" fill="#569cd6"/><rect x="15.5" y="59.9" width="2.0" height="1.5" fill="#569cd6"/><rect x="18.5" y="59.9" width="3.0" height="1.5" fill="#9cdcfe"/><rect x="22.5" y="59.9" width="1.0" height="1.5" fill="#9cdcfe"/><rect x="24.5" y="59.9" width="3.0" height="1.5" fill="#ce9178"/><rect x="28.5" y="59.9" width="3.5" height="1.5" fill="#ce9178"/><rect x="32.0" y="59.9" width="2.0" height="1.5" fill="#808080"/><rect x="13.5" y="61.9" width="6.0" height="1.5" fill="#569cd6"/><rect x="20.5" y="61.9" width="4.0" height="1.5" fill="#9cdcfe"/><rect x="22.5" y="61.9" width="2.0" height="1.5" fill="#808080"/><rect x="15.5" y="63.9" width="6.0" height="1.5" fill="#569cd6"/><rect x="22.5" y="63.9" width="6.0" height="1.5" fill="#9cdcfe"/><rect x="29.5" y="63.9" width="7.0" height="1.5" fill="#ce9178"/><rect x="37.5" y="63.9" width="5.0" height="1.5" fill="#ce9178"/><rect x="43.5" y="63.9" width="4.0" height="1.5" fill="#ce9178"/><rect x="48.5" y="63.9" width="5.0" height="1.5" fill="#9cdcfe"/><rect x="55.5" y="63.9" width="4.0" height="1.5" fill="#ce9178"/><rect x="60.5" y="63.9" width="5.0" height="1.5" fill="#ce9178"/><rect x="66.5" y="63.9" width="1.0" height="1.5" fill="#ce9178"/><rect x="68.5" y="63.9" width="3.0" height="1.5" fill="#9cdcfe"/><rect x="72.5" y="63.9" width="2.0" height="1.5" fill="#9cdcfe"/><rect x="75.5" y="63.9" width="7.0" height="1.5" fill="#ce9178"/><rect x="83.5" y="63.9" width="3.0" height="1.5" fill="#ce9178"/><rect x="87.5" y="63.9" width="1.5" height="1.5" fill="#ce9178"/><rect x="89.0" y="63.9" width="2.0" height="1.5" fill="#808080"/><rect x="13.5" y="65.9" width="2.5" height="1.5" fill="#569cd6"/><rect x="13.5" y="67.9" width="3.0" height="1.5" fill="#569cd6"/><rect x="17.5" y="67.9" width="2.0" height="1.5" fill="#569cd6"/><rect x="20.5" y="67.9" width="4.0" height="1.5" fill="#9cdcfe"/><rect x="25.5" y="67.9" width="7.0" height="1.5" fill="#ce9178"/><rect x="33.0" y="67.9" width="2.0" height="1.5" fill="#808080"/><rect x="15.5" y="69.9" width="3.0" height="1.5" fill="#569cd6"/><rect x="17.5" y="71.9" width="3.0" height="1.5" fill="#569cd6"/><rect x="19.5" y="73.9" width="3.0" height="1.5" fill="#569cd6"/><rect x="23.5" y="73.9" width="2.0" height="1.5" fill="#569cd6"/><rect x="26.5" y="73.9" width="7.0" height="1.5" fill="#9cdcfe"/><rect x="34.5" y="73.9" width="6.0" height="1.5" fill="#ce9178"/><rect x="41.5" y="73.9" width="3.0" height="1.5" fill="#ce9178"/><rect x="45.5" y="73.9" width="4.5" height="1.5" fill="#9cdcfe"/><rect x="48.0" y="73.9" width="2.0" height="1.5" fill="#808080"/><rect x="17.5" y="75.9" width="3.0" height="1.5" fill="#569cd6"/><rect x="17.5" y="77.9" width="3.0" height="1.5" fill="#569cd6"/><rect x="19.5" y="79.9" width="3.0" height="1.5" fill="#569cd6"/><rect x="23.5" y="79.9" width="2.0" height="1.5" fill="#569cd6"/><rect x="26.5" y="79.9" width="4.0" height="1.5" fill="#9cdcfe"/><rect x="31.5" y="79.9" width="2.0" height="1.5" fill="#9cdcfe"/><rect x="34.5" y="79.9" width="5.0" height="1.5" fill="#ce9178"/><rect x="40.5" y="79.9" width="8.0" height="1.5" fill="#ce9178"/><rect x="49.5" y="79.9" width="6.5" height="1.5" fill="#ce9178"/><rect x="56.0" y="79.9" width="2.0" height="1.5" fill="#808080"/><rect x="17.5" y="81.9" width="3.0" height="1.5" fill="#569cd6"/><rect x="17.5" y="83.9" width="3.0" height="1.5" fill="#569cd6"/><rect x="19.5" y="85.9" width="4.0" height="1.5" fill="#569cd6"/><rect x="24.5" y="85.9" width="1.0" height="1.5" fill="#569cd6"/><rect x="26.5" y="85.9" width="5.0" height="1.5" fill="#9cdcfe"/><rect x="32.5" y="85.9" width="5.0" height="1.5" fill="#ce9178"/><rect x="38.5" y="85.9" width="7.0" height="1.5" fill="#ce9178"/><rect x="46.5" y="85.9" width="9.0" height="1.5" fill="#ce9178"/><rect x="56.5" y="85.9" width="0.5" height="1.5" fill="#ce9178"/><rect x="57.0" y="85.9" width="2.0" height="1.5" fill="#808080"/><rect x="17.5" y="87.9" width="3.0" height="1.5" fill="#569cd6"/><rect x="15.5" y="89.9" width="4.0" height="1.5" fill="#569cd6"/><rect x="13.5" y="91.9" width="5.0" height="1.5" fill="#569cd6"/><rect x="11.5" y="93.9" width="3.0" height="1.5" fill="#569cd6"/><rect x="15.5" y="93.9" width="4.0" height="1.5" fill="#569cd6"/><rect x="11.5" y="95.9" width="4.5" height="1.5" fill="#569cd6"/><rect x="13.5" y="97.9" width="2.5" height="1.5" fill="#569cd6"/><rect x="15.0" y="99.9" width="9.0" height="1.5" fill="#c8c8c8"/><rect x="25.0" y="99.9" width="7.0" height="1.5" fill="#c8c8c8"/><rect x="33.0" y="99.9" width="1.0" height="1.5" fill="#c8c8c8"/><rect x="13.5" y="101.9" width="2.5" height="1.5" fill="#569cd6"/><rect x="13.5" y="103.9" width="6.0" height="1.5" fill="#569cd6"/><rect x="20.5" y="103.9" width="4.0" height="1.5" fill="#9cdcfe"/><rect x="25.5" y="103.9" width="3.0" height="1.5" fill="#ce9178"/><rect x="29.5" y="103.9" width="8.5" height="1.5" fill="#ce9178"/><rect x="38.0" y="103.9" width="2.0" height="1.5" fill="#808080"/><rect x="15.0" y="105.9" width="8.0" height="1.5" fill="#c8c8c8"/><rect x="24.0" y="105.9" width="3.0" height="1.5" fill="#c8c8c8"/><rect x="28.0" y="105.9" width="6.0" height="1.5" fill="#c8c8c8"/><rect x="35.0" y="105.9" width="4.0" height="1.5" fill="#c8c8c8"/><rect x="40.0" y="105.9" width="4.0" height="1.5" fill="#c8c8c8"/><rect x="45.0" y="105.9" width="9.0" height="1.5" fill="#c8c8c8"/><rect x="55.0" y="105.9" width="6.0" height="1.5" fill="#c8c8c8"/><rect x="62.0" y="105.9" width="3.0" height="1.5" fill="#c8c8c8"/><rect x="66.0" y="105.9" width="7.0" height="1.5" fill="#c8c8c8"/><rect x="74.0" y="105.9" width="3.0" height="1.5" fill="#c8c8c8"/><rect x="78.0" y="105.9" width="2.5" height="1.5" fill="#c8c8c8"/><rect x="15.0" y="107.9" width="3.0" height="1.5" fill="#c8c8c8"/><rect x="19.0" y="107.9" width="8.0" height="1.5" fill="#c8c8c8"/><rect x="28.0" y="107.9" width="6.0" height="1.5" fill="#c8c8c8"/><rect x="35.0" y="107.9" width="4.0" height="1.5" fill="#c8c8c8"/><rect x="40.0" y="107.9" width="9.0" height="1.5" fill="#c8c8c8"/><rect x="50.0" y="107.9" width="3.0" height="1.5" fill="#c8c8c8"/><rect x="54.0" y="107.9" width="4.0" height="1.5" fill="#c8c8c8"/><rect x="13.5" y="109.9" width="2.5" height="1.5" fill="#569cd6"/><rect x="13.5" y="113.9" width="3.0" height="1.5" fill="#569cd6"/><rect x="11.5" y="119.9" width="3.0" height="1.5" fill="#569cd6"/><rect x="15.5" y="119.9" width="2.0" height="1.5" fill="#569cd6"/><rect x="11.5" y="121.9" width="6.0" height="1.5" fill="#569cd6"/><rect x="18.5" y="121.9" width="4.0" height="1.5" fill="#9cdcfe"/><rect x="23.5" y="121.9" width="5.0" height="1.5" fill="#ce9178"/><rect x="29.5" y="121.9" width="2.0" height="1.5" fill="#ce9178"/><rect x="31.5" y="121.9" width="2.0" height="1.5" fill="#808080"/><rect x="13.5" y="123.9" width="3.0" height="1.5" fill="#569cd6"/><rect x="17.5" y="123.9" width="2.0" height="1.5" fill="#569cd6"/><rect x="20.5" y="123.9" width="4.0" height="1.5" fill="#9cdcfe"/><rect x="25.5" y="123.9" width="3.0" height="1.5" fill="#ce9178"/><rect x="29.5" y="123.9" width="6.0" height="1.5" fill="#ce9178"/><rect x="36.5" y="123.9" width="2.0" height="1.5" fill="#9cdcfe"/><rect x="36.5" y="123.9" width="2.0" height="1.5" fill="#808080"/><rect x="15.5" y="125.9" width="4.0" height="1.5" fill="#569cd6"/><rect x="19.5" y="125.9" width="9.0" height="1.5" fill="#c8c8c8"/><rect x="29.5" y="125.9" width="2.0" height="1.5" fill="#c8c8c8"/><rect x="31.5" y="125.9" width="4.0" height="1.5" fill="#569cd6"/><rect x="15.5" y="127.9" width="4.0" height="1.5" fill="#569cd6"/><rect x="19.5" y="127.9" width="3.0" height="1.5" fill="#c8c8c8"/><rect x="23.5" y="127.9" width="4.0" height="1.5" fill="#c8c8c8"/><rect x="28.5" y="127.9" width="4.0" height="1.5" fill="#c8c8c8"/><rect x="33.5" y="127.9" width="1.5" height="1.5" fill="#c8c8c8"/><rect x="35.0" y="127.9" width="4.0" height="1.5" fill="#569cd6"/><rect x="15.5" y="129.9" width="4.0" height="1.5" fill="#569cd6"/><rect x="19.5" y="129.9" width="7.0" height="1.5" fill="#c8c8c8"/><rect x="27.5" y="129.9" width="8.0" height="1.5" fill="#c8c8c8"/><rect x="36.0" y="129.9" width="5.0" height="1.5" fill="#569cd6"/><rect x="13.5" y="131.9" width="6.0" height="1.5" fill="#569cd6"/><rect x="20.5" y="131.9" width="2.0" height="1.5" fill="#569cd6"/><rect x="13.5" y="133.9" width="5.0" height="1.5" fill="#569cd6"/><rect x="19.5" y="133.9" width="1.0" height="1.5" fill="#569cd6"/><rect x="15.5" y="135.9" width="4.0" height="1.5" fill="#569cd6"/><rect x="19.5" y="135.9" width="5.0" height="1.5" fill="#c8c8c8"/><rect x="25.5" y="135.9" width="5.0" height="1.5" fill="#569cd6"/><rect x="15.5" y="137.9" width="4.0" height="1.5" fill="#569cd6"/><rect x="20.5" y="137.9" width="1.0" height="1.5" fill="#569cd6"/><rect x="22.5" y="137.9" width="7.0" height="1.5" fill="#9cdcfe"/><rect x="30.5" y="137.9" width="8.0" height="1.5" fill="#ce9178"/><rect x="39.5" y="137.9" width="4.0" height="1.5" fill="#ce9178"/><rect x="44.5" y="137.9" width="6.0" height="1.5" fill="#9cdcfe"/><rect x="52.5" y="137.9" width="8.0" height="1.5" fill="#ce9178"/><rect x="61.5" y="137.9" width="7.0" height="1.5" fill="#ce9178"/><rect x="69.5" y="137.9" width="5.5" height="1.5" fill="#ce9178"/><rect x="75.0" y="137.9" width="2.0" height="1.5" fill="#808080"/><rect x="17.5" y="139.9" width="8.0" height="1.5" fill="#c8c8c8"/><rect x="26.5" y="139.9" width="7.0" height="1.5" fill="#c8c8c8"/><rect x="34.5" y="139.9" width="8.0" height="1.5" fill="#c8c8c8"/><rect x="43.5" y="139.9" width="6.0" height="1.5" fill="#c8c8c8"/><rect x="50.5" y="139.9" width="4.0" height="1.5" fill="#c8c8c8"/><rect x="55.5" y="139.9" width="5.5" height="1.5" fill="#c8c8c8"/><rect x="13.5" y="141.9" width="6.0" height="1.5" fill="#569cd6"/><rect x="20.5" y="141.9" width="2.0" height="1.5" fill="#569cd6"/><rect x="13.5" y="143.9" width="6.0" height="1.5" fill="#569cd6"/><rect x="20.5" y="143.9" width="5.0" height="1.5" fill="#9cdcfe"/><rect x="26.5" y="143.9" width="6.0" height="1.5" fill="#ce9178"/><rect x="33.5" y="143.9" width="1.0" height="1.5" fill="#ce9178"/><rect x="34.5" y="143.9" width="2.0" height="1.5" fill="#808080"/><rect x="15.5" y="145.9" width="4.0" height="1.5" fill="#569cd6"/><rect x="19.5" y="145.9" width="6.5" height="1.5" fill="#c8c8c8"/><rect x="26.0" y="145.9" width="5.0" height="1.5" fill="#569cd6"/><rect x="15.5" y="147.9" width="4.0" height="1.5" fill="#569cd6"/><rect x="17.5" y="149.9" width="5.0" height="1.5" fill="#569cd6"/><rect x="24.5" y="149.9" width="4.0" height="1.5" fill="#9cdcfe"/><rect x="30.5" y="149.9" width="9.0" height="1.5" fill="#ce9178"/><rect x="40.5" y="149.9" width="6.0" height="1.5" fill="#ce9178"/><rect x="47.5" y="149.9" width="6.0" height="1.5" fill="#9cdcfe"/><rect x="54.5" y="149.9" width="9.0" height="1.5" fill="#ce9178"/><rect x="64.5" y="149.9" width="5.0" height="1.5" fill="#ce9178"/><rect x="70.5" y="149.9" width="4.0" height="1.5" fill="#ce9178"/><rect x="75.5" y="149.9" width="5.0" height="1.5" fill="#9cdcfe"/><rect x="81.5" y="149.9" width="2.5" height="1.5" fill="#ce9178"/><rect x="84.0" y="149.9" width="2.0" height="1.5" fill="#808080"/><rect x="17.5" y="151.9" width="6.0" height="1.5" fill="#569cd6"/><rect x="24.5" y="151.9" width="6.0" height="1.5" fill="#9cdcfe"/><rect x="31.5" y="151.9" width="6.0" height="1.5" fill="#ce9178"/><rect x="38.5" y="151.9" width="4.0" height="1.5" fill="#ce9178"/><rect x="43.5" y="151.9" width="4.0" height="1.5" fill="#ce9178"/><rect x="48.5" y="151.9" width="4.0" height="1.5" fill="#ce9178"/><rect x="53.5" y="151.9" width="5.0" height="1.5" fill="#9cdcfe"/><rect x="60.5" y="151.9" width="4.0" height="1.5" fill="#ce9178"/><rect x="65.5" y="151.9" width="4.0" height="1.5" fill="#ce9178"/><rect x="70.5" y="151.9" width="4.5" height="1.5" fill="#9cdcfe"/><rect x="73.0" y="151.9" width="2.0" height="1.5" fill="#808080"/><rect x="17.5" y="153.9" width="6.0" height="1.5" fill="#569cd6"/><rect x="24.5" y="153.9" width="5.0" height="1.5" fill="#9cdcfe"/><rect x="30.5" y="153.9" width="9.0" height="1.5" fill="#ce9178"/><rect x="40.5" y="153.9" width="9.0" height="1.5" fill="#ce9178"/><rect x="50.5" y="153.9" width="8.0" height="1.5" fill="#ce9178"/><rect x="59.5" y="153.9" width="5.0" height="1.5" fill="#ce9178"/><rect x="65.5" y="153.9" width="3.0" height="1.5" fill="#9cdcfe"/><rect x="69.5" y="153.9" width="3.0" height="1.5" fill="#9cdcfe"/><rect x="73.5" y="153.9" width="1.5" height="1.5" fill="#ce9178"/><rect x="75.0" y="153.9" width="2.0" height="1.5" fill="#808080"/><rect x="15.5" y="155.9" width="5.0" height="1.5" fill="#569cd6"/><rect x="13.5" y="157.9" width="6.0" height="1.5" fill="#569cd6"/><rect x="20.5" y="157.9" width="2.0" height="1.5" fill="#569cd6"/><rect x="11.5" y="159.9" width="8.0" height="1.5" fill="#569cd6"/><rect x="9.5" y="161.9" width="3.0" height="1.5" fill="#569cd6"/><rect x="13.5" y="161.9" width="1.5" height="1.5" fill="#569cd6"/><rect x="9.5" y="165.9" width="4.0" height="1.5" fill="#569cd6"/><rect x="14.5" y="165.9" width="0.5" height="1.5" fill="#569cd6"/></g></svg>
<div class="r" style="left:1473px;top:221.8px;width:2.2px;height:2.2px;background:#1b9ad0;"></div>
<div class="r" style="left:1583px;top:104px;width:1px;height:332px;background:#3b3b3b;"></div>
<div class="r" style="left:1583.5px;top:303.5px;width:6px;height:6px;background:#1b81a8;"></div>
<div class="r" style="left:1589.5px;top:304.6px;width:10.5px;height:2px;background:#a6a6a6;"></div>
<div class="r" style="left:446px;top:436px;width:1154px;height:398px;background:#1e1e1e;"></div>
<div class="r" style="left:446px;top:436px;width:1154px;height:1px;background:#424242;"></div>
<div class="r" style="left:759px;top:473.6px;width:61.3px;height:1.3px;background:#e7e7e7;"></div>
<div class="r" style="left:1182px;top:444px;width:204px;height:27.8px;background:#3c3c3c;"></div>
<svg class="s" style="left:1364px;top:452px;" width="14" height="10" viewBox="0 0 14 10"><path d="M1 1.5 L7 8 L13 1.5" fill="none" stroke="#c5c5c5" stroke-width="1.4"/></svg>
<svg class="s" style="left:1405px;top:448px;" width="19" height="19" viewBox="0 0 19 19"><path d="M9.5 1 V17.5 M1 9.2 H17.8" stroke="#c5c5c5" stroke-width="1.6"/></svg>
<svg class="s" style="left:1444.5px;top:448.5px;" width="18" height="17" viewBox="0 0 18 17"><rect x="1.2" y="1" width="15.6" height="15" rx="1.5" fill="none" stroke="#c5c5c5" stroke-width="1.5"/><path d="M9 1 V16" stroke="#c5c5c5" stroke-width="1.5"/></svg>
<svg class="s" style="left:1483px;top:448px;" width="16" height="17" viewBox="0 0 16 17"><path d="M1 3.5 H15 M5.5 3.5 V1.3 H10.5 V3.5 M2.8 3.5 L3.6 15.5 H12.4 L13.2 3.5 M6 6 V13.5 M8 6 V13.5 M10 6 V13.5" fill="none" stroke="#c5c5c5" stroke-width="1.4"/></svg>
<svg class="s" style="left:1522.5px;top:452px;" width="15" height="10" viewBox="0 0 15 10"><path d="M1 8 L7.3 1.6 L13.6 8" fill="none" stroke="#c5c5c5" stroke-width="1.5"/></svg>
<svg class="s" style="left:1562px;top:450.5px;" width="13" height="13" viewBox="0 0 13 13"><path d="M1 1 L11.8 11.8 M11.8 1 L1 11.8" stroke="#c5c5c5" stroke-width="1.4"/></svg>
<div class="tl" style="left:470px;top:513.76px"><span style="color:#12c67e">didi@DESKTOP-3DDU16A</span><span style="color:#cccccc"> </span><span style="color:#d13fc4">MINGW64</span><span style="color:#cccccc"> </span><span style="color:#e5e510">~/Desktop/git-github-practice-exercises</span><span style="color:#cccccc"> </span><span style="color:#11a8cd">(master)</span></div>
<div class="tl" style="left:470px;top:533.76px"><span style="color:#cccccc">$ git status</span></div>
<div class="tl" style="left:470px;top:553.76px"><span style="color:#cccccc">On branch master</span></div>
<div class="tl" style="left:470px;top:573.76px"><span style="color:#cccccc">Your branch is up to date with &#x27;origin/master&#x27;.</span></div>
<div class="tl" style="left:470px;top:613.76px"><span style="color:#cccccc">Changes not staged for commit:</span></div>
<div class="tl" style="left:470px;top:633.76px"><span style="color:#cccccc">  (use &quot;git add &lt;file&gt;...&quot; to update what will be committed)</span></div>
<div class="tl" style="left:470px;top:653.76px"><span style="color:#cccccc">  (use &quot;git restore &lt;file&gt;...&quot; to discard changes in working directory)</span></div>
<div class="tl" style="left:470px;top:673.76px"><span style="color:#ee1c1c">        modified:   exercitii.html</span></div>
<div class="tl" style="left:470px;top:713.76px"><span style="color:#cccccc">no changes added to commit (use &quot;git add&quot; and/or &quot;git commit -a&quot;)</span></div>
<div class="tl" style="left:470px;top:753.76px"><span style="color:#12c67e">didi@DESKTOP-3DDU16A</span><span style="color:#cccccc"> </span><span style="color:#d13fc4">MINGW64</span><span style="color:#cccccc"> </span><span style="color:#e5e510">~/Desktop/git-github-practice-exercises</span><span style="color:#cccccc"> </span><span style="color:#11a8cd">(master)</span></div>
<div class="tl" style="left:470px;top:773.76px"><span style="color:#cccccc">$ git add exercitii.html</span></div>
<div class="r" style="left:686px;top:772.3px;width:9px;height:19.5px;background:#c0c0c0;"></div>
<div class="r" style="left:1588px;top:800px;width:12px;height:34px;background:#424242;"></div>
<div class="r" style="left:0px;top:834px;width:1600px;height:26px;background:#007acc;"></div>
<div class="r" style="left:0px;top:834px;width:41px;height:26px;background:#16825d;"></div>
<svg class="s" style="left:14px;top:839px;" width="14" height="15" viewBox="0 0 14 15"><path d="M1.5 7 L5.8 11 L1.5 14.5" fill="none" stroke="#fff" stroke-width="1.4"/><path d="M12.5 1 L8.2 4.5 L12.5 8.5" fill="none" stroke="#fff" stroke-width="1.4"/></svg>
<svg class="s" style="left:51px;top:837px;" width="16" height="19" viewBox="0 0 16 19"><circle cx="3.8" cy="3.8" r="2.4" fill="none" stroke="#fff" stroke-width="1.3"/><circle cx="3.8" cy="15" r="2.4" fill="none" stroke="#fff" stroke-width="1.3"/><circle cx="12" cy="5.8" r="2.4" fill="none" stroke="#fff" stroke-width="1.3"/><path d="M3.8 6.2 V12.6 M12 8.2 Q12 11 6 12.8" fill="none" stroke="#fff" stroke-width="1.3"/></svg>
<svg class="s" style="left:139px;top:839px;" width="19" height="15" viewBox="0 0 19 15"><path d="M2.5 6.5 A6.5 6 0 0 1 15 5.5 M16.5 8.5 A6.5 6 0 0 1 4 9.5" fill="none" stroke="#fff" stroke-width="1.5"/><path d="M15.8 1.5 V6 H11.5 M3.2 13.5 V9 H7.5" fill="none" stroke="#fff" stroke-width="1.5"/></svg>
<svg class="s" style="left:176px;top:838px;" width="17" height="17" viewBox="0 0 17 17"><circle cx="8.3" cy="8.3" r="6.9" fill="none" stroke="#fff" stroke-width="1.3"/><path d="M5.3 5.3 L11.3 11.3 M11.3 5.3 L5.3 11.3" stroke="#fff" stroke-width="1.3"/></svg>
<svg class="s" style="left:208.5px;top:837.8px;" width="17" height="16" viewBox="0 0 17 16"><path d="M8.3 1.5 L15.5 14.5 H1.2 Z" fill="none" stroke="#fff" stroke-width="1.3" stroke-linejoin="round"/><path d="M8.3 5.8 V10.5" stroke="#fff" stroke-width="1.5"/><circle cx="8.3" cy="12.3" r="0.9" fill="#fff"/></svg>
<svg class="s" style="left:795px;top:838px;" width="12" height="18" viewBox="0 0 12 18"><circle cx="5.8" cy="7" r="3.4" fill="none" stroke="#fff" stroke-width="1.4"/><path d="M5.8 1 V3.6 M5.8 10.4 V17" stroke="#fff" stroke-width="1.4"/></svg>
<svg class="s" style="left:1278.5px;top:838px;" width="15" height="19" viewBox="0 0 15 19"><path d="M3 11.5 A6 6 0 1 1 12 11.5" fill="none" stroke="#fff" stroke-width="1.4"/><path d="M5 9 A3 3 0 1 1 10 9" fill="none" stroke="#fff" stroke-width="1.4"/><rect x="6" y="7.5" width="3" height="10" rx="1.3" fill="#fff"/></svg>
<svg class="s" style="left:1363.5px;top:840px;" width="18" height="13" viewBox="0 0 18 13"><path d="M1 6.5 L4.5 11 L11 1.5 M6.5 8.5 L8.2 11 L16.5 1.5" fill="none" stroke="#fff" stroke-width="1.4"/></svg>
<svg class="s" style="left:1442px;top:840px;" width="18" height="13" viewBox="0 0 18 13"><path d="M1 6.5 L4.5 11 L11 1.5 M6.5 8.5 L8.2 11 L16.5 1.5" fill="none" stroke="#fff" stroke-width="1.4"/></svg>
<svg class="s" style="left:1529px;top:838px;" width="17" height="17" viewBox="0 0 17 17"><circle cx="6" cy="6" r="3.2" fill="none" stroke="#fff" stroke-width="1.3"/><path d="M1 15.5 Q1.5 10.5 6 10.5 Q10.5 10.5 11 15.5" fill="none" stroke="#fff" stroke-width="1.3"/><path d="M8 1.2 H16 V8.5 H13 L11 10.5 V8.5" fill="none" stroke="#fff" stroke-width="1.2"/></svg>
<svg class="s" style="left:1566px;top:838px;" width="16" height="17" viewBox="0 0 16 17"><path d="M8 1.5 Q3 1.5 3 7 V11.5 L1.5 13.5 H14.5 L13 11.5 V7 Q13 1.5 8 1.5 Z M6 14.5 Q8 17 10 14.5" fill="none" stroke="#fff" stroke-width="1.3"/></svg>
<div class="r" style="left:0px;top:860px;width:1600px;height:40px;background:linear-gradient(90deg,#233b42 0%,#22373f 50%,#1f2f43 69%,#1c2947 84%,#1c2848 100%);"></div>
<div class="r" style="left:197px;top:860px;width:48px;height:40px;background:rgba(255,255,255,0.2);"></div>
<svg class="s" style="left:15px;top:871px;" width="18" height="18" viewBox="0 0 18 18"><path d="M0.6 2.6 L7.4 1.6 V8.3 H0.6 Z M8.4 1.4 L17 0.2 V8.3 H8.4 Z M0.6 9.3 H7.4 V16 L0.6 15 Z M8.4 9.3 H17 V17.3 L8.4 16.2 Z" fill="#ffffff"/></svg>
<svg class="s" style="left:63px;top:869px;" width="20" height="21" viewBox="0 0 20 21"><circle cx="11.5" cy="8.4" r="5.6" fill="none" stroke="#fff" stroke-width="1.2"/><path d="M7.5 12.5 L1 19" stroke="#fff" stroke-width="1.3"/></svg>
<svg class="s" style="left:111px;top:870px;" width="24" height="20" viewBox="0 0 24 20"><rect x="0.9" y="2.2" width="21.6" height="16" fill="#ffd76a"/><path d="M0.9 0.9 H9.8 L10.9 2 L9.8 3.6 H0.9 Z" fill="#e3a112"/><path d="M0.9 3.6 H22.5 V4.6 H0.9 Z" fill="#ffe08a"/><path d="M5 18.9 V12.1 Q5 11.1 6 11.1 H17.9 Q18.9 11.1 18.9 12.1 V18.9 H15 V14.3 H9.1 V18.9 Z" fill="#3c93e6"/></svg>
<svg class="s" style="left:155px;top:864px;" width="34" height="32" viewBox="0 0 34 32"><defs><linearGradient id="eg" x1="0" y1="0" x2="1" y2="0.6"><stop offset="0" stop-color="#35bff5"/><stop offset="0.55" stop-color="#2fc6c8"/><stop offset="1" stop-color="#6fe24a"/></linearGradient></defs>
<circle cx="17.1" cy="15.9" r="12.2" fill="#1078d6"/>
<path d="M5 13.5 Q6.5 3.8 17 3.6 Q28.5 3.8 29.3 15 Q29 20.5 23.5 20.6 Q18.5 20.8 18.3 17.8 Q19.6 14 16.5 12.8 Q11 10.5 5 13.5 Z" fill="url(#eg)"/>
<path d="M12.3 16.5 Q12.3 24.5 20.5 26.3 Q24.8 26.8 27.3 22.2 Q23.5 23.2 19.8 22 Q16.8 20.8 16.6 17.5 Z" fill="#0d57a8"/>
<ellipse cx="16.9" cy="16.3" rx="2.3" ry="2.6" fill="#22393f"/></svg>
<svg class="s" style="left:206px;top:866px;" width="30" height="28" viewBox="0 0 30 28">
<path d="M5.8 17.3 L21.5 3.8" stroke="#0f7fcc" stroke-width="3.9" stroke-linecap="round"/>
<path d="M5.8 9.7 L21.5 23.2" stroke="#118cd8" stroke-width="3.9" stroke-linecap="round"/>
<path d="M21.5 1.8 L27.3 4.6 L27.3 22.4 L21.5 25.2 Z" fill="#1ea8f0"/>
</svg>
<svg class="s" style="left:253px;top:864px;" width="35" height="32" viewBox="0 0 35 32"><circle cx="17" cy="15.8" r="11.1" fill="#fdc834"/>
<path d="M17 10.9 L26.96 10.9 A11.1 11.1 0 0 0 7.78 9.62 L12.76 18.25 Z" fill="#de4a3b"/>
<path d="M21.24 18.25 L16.26 26.88 A11.1 11.1 0 0 1 7.78 9.62 L12.76 18.25 Z" fill="#1ba25c"/>
<circle cx="17" cy="15.8" r="4.95" fill="#f1f3f4"/><circle cx="17" cy="15.8" r="3.9" fill="#4a88f0"/></svg>
<svg class="s" style="left:300px;top:864px;" width="34" height="32" viewBox="0 0 34 32"><defs><linearGradient id="np" x1="0" y1="0" x2="1" y2="1"><stop offset="0" stop-color="#d9eef4"/><stop offset="0.5" stop-color="#8ccadb"/><stop offset="1" stop-color="#3f93ac"/></linearGradient></defs>
<path d="M15.5 5 L28 7.3 L29 24.5 L20.5 26.6 L7 20.5 Z" fill="url(#np)"/>
<path d="M28 7.3 L29 24.5 L24.5 25.5 Z" fill="#eef4f5"/>
<path d="M28.3 8 L29.3 23.5 L28.8 24.2 Z" fill="#c99a40"/>
<path d="M15.5 5 L28 7.3 L27.8 8.6 L15.2 6.3 Z" fill="#aaaaaa"/></svg>
<svg class="s" style="left:356px;top:868px;" width="24" height="24" viewBox="0 0 24 24"><rect x="0.7" y="0.8" width="22.3" height="22.4" rx="1.3" fill="#fecf0a"/>
<path d="M12 12 H21.5 L12 21.5 Z" fill="#3e3b35"/><path d="M21.5 12 V21.5 Q21.5 22.3 20.7 22.3 H12 Z" fill="#e8a512"/></svg>
<div class="r" style="left:152px;top:897.5px;width:40px;height:2.5px;background:#76b9ed;"></div>
<div class="r" style="left:197px;top:897.5px;width:48px;height:2.5px;background:#8cc8f5;"></div>
<div class="r" style="left:250px;top:897.5px;width:32px;height:2.5px;background:#76b9ed;"></div>
<div class="r" style="left:282.5px;top:897.5px;width:7.5px;height:2.5px;background:#5d8db3;"></div>
<div class="r" style="left:348px;top:897.5px;width:32px;height:2.5px;background:#76b9ed;"></div>
<div class="r" style="left:380.5px;top:897.5px;width:7.5px;height:2.5px;background:#5d8db3;"></div>
<svg class="s" style="left:1354px;top:875px;" width="14" height="9" viewBox="0 0 14 9"><path d="M1 8 L7 1.6 L13 8" fill="none" stroke="#fff" stroke-width="1.2"/></svg>
<svg class="s" style="left:1376px;top:873px;" width="18" height="12" viewBox="0 0 18 12"><path d="M1 4 V7 M3.5 4 V7 M0.5 7 H4 V9 H2.3 V11" fill="none" stroke="#fff" stroke-width="1.2"/><rect x="5" y="2.5" width="11" height="8" fill="none" stroke="#fff" stroke-width="1.2"/><rect x="6.5" y="4" width="8" height="5" fill="#fff"/><rect x="16.3" y="4.8" width="1.3" height="3.5" fill="#fff"/></svg>
<svg class="s" style="left:1403px;top:873px;" width="14" height="15" viewBox="0 0 14 15"><path d="M1.5 13.5 A12 12 0 0 1 13 2 M4.2 13.5 A9.3 9.3 0 0 1 13 4.6 M7 13.5 A6.5 6.5 0 0 1 13 7.4" fill="none" stroke="#fff" stroke-width="1" opacity="0.85"/><circle cx="11.3" cy="12" r="1.6" fill="#fff"/></svg>
<svg class="s" style="left:1424px;top:873px;" width="19" height="16" viewBox="0 0 19 16"><path d="M1 5 H4.5 L9 1.5 V14.5 L4.5 11 H1 Z" fill="none" stroke="#fff" stroke-width="1.1"/><path d="M11.5 5.5 Q13 8 11.5 10.5 M13.6 3.8 Q16 8 13.6 12.2" fill="none" stroke="#fff" stroke-width="1.1"/><path d="M15.8 2 Q19 8 15.8 14" fill="none" stroke="#999" stroke-width="1"/></svg>
<svg class="s" style="left:1558px;top:872px;" width="18" height="16" viewBox="0 0 18 16"><path d="M0.8 0.8 H16.8 V12 H10.5 L8.8 14.2 L7.1 12 H0.8 Z" fill="none" stroke="#fff" stroke-width="1.2"/></svg>
<div class="r" style="left:1595px;top:860px;width:1px;height:40px;background:#5a6270;"></div>
<div class="t" style="left:50.70px;top:11.30px;font:400 15px/15px 'Liberation Sans';color:#cccccc;">File</div>
<div class="t" style="left:93.50px;top:11.30px;font:400 15px/15px 'Liberation Sans';color:#cccccc;">Edit</div>
<div class="t" style="left:139.50px;top:11.30px;font:400 15px/15px 'Liberation Sans';color:#cccccc;">Selection</div>
<div class="t" style="left:221.40px;top:11.30px;font:400 15px/15px 'Liberation Sans';color:#cccccc;">View</div>
<div class="t" style="left:273.50px;top:11.30px;font:400 15px/15px 'Liberation Sans';color:#cccccc;">Go</div>
<div class="t" style="left:311.90px;top:11.30px;font:400 15px/15px 'Liberation Sans';color:#cccccc;">Run</div>
<div class="t" style="left:359.30px;top:11.30px;font:400 15px/15px 'Liberation Sans';color:#cccccc;">Terminal</div>
<div class="t" style="left:435.30px;top:11.30px;font:400 15px/15px 'Liberation Sans';color:#cccccc;">Help</div>
<div class="t" style="left:595.00px;top:12.21px;font:400 14.4px/14.4px 'Liberation Sans';color:#cccccc;transform:scaleX(1.0083);transform-origin:0 0;">exercitii.html - git-github-practice-exercises - Visual Studio Code</div>
<div class="t" style="left:81.15px;top:50.83px;font:400 13.2px/13.2px 'Liberation Sans';color:#bbbbbb;transform:scaleX(0.8535);transform-origin:0 0;">EXPLORER</div>
<div class="t" style="left:82.00px;top:84.23px;font:700 13.2px/13.2px 'Liberation Sans';color:#cccccc;transform:scaleX(0.9305);transform-origin:0 0;">OPEN EDITORS</div>
<div class="t" style="left:125.00px;top:109.09px;font:400 15.6px/15.6px 'Liberation Sans';color:#e2c08d;transform:scaleX(1.0095);transform-origin:0 0;">exercitii.html</div>
<div class="t" style="left:414.80px;top:110.62px;font:700 13.8px/13.8px 'Liberation Sans';color:#e2c08d;transform:scaleX(1.1091);transform-origin:0 0;">M</div>
<div class="t" style="left:124.49px;top:136.39px;font:400 15.6px/15.6px 'Liberation Sans';color:#cccccc;transform:scaleX(1.0143);transform-origin:0 0;">index.html</div>
<div class="t" style="left:81.80px;top:164.43px;font:700 13.2px/13.2px 'Liberation Sans';color:#cccccc;transform:scaleX(0.9573);transform-origin:0 0;">OUTLINE</div>
<div class="t" style="left:81.80px;top:190.13px;font:700 13.2px/13.2px 'Liberation Sans';color:#cccccc;transform:scaleX(0.9374);transform-origin:0 0;">GIT-GITHUB-PRACTICE-EXERCISES</div>
<div class="t" style="left:98.50px;top:215.09px;font:400 15.6px/15.6px 'Liberation Sans';color:#cccccc;transform:scaleX(0.9012);transform-origin:0 0;">assets</div>
<div class="t" style="left:98.50px;top:241.49px;font:400 15.6px/15.6px 'Liberation Sans';color:#cccccc;transform:scaleX(0.9876);transform-origin:0 0;">style</div>
<div class="t" style="left:98.50px;top:268.09px;font:400 15.6px/15.6px 'Liberation Sans';color:#e2c08d;transform:scaleX(1.0095);transform-origin:0 0;">exercitii.html</div>
<div class="t" style="left:98.50px;top:294.79px;font:400 15.6px/15.6px 'Liberation Sans';color:#cccccc;transform:scaleX(1.0248);transform-origin:0 0;">finalisti.html</div>
<div class="t" style="left:97.47px;top:321.09px;font:400 15.6px/15.6px 'Liberation Sans';color:#cccccc;transform:scaleX(1.0301);transform-origin:0 0;">index.html</div>
<div class="t" style="left:97.46px;top:347.59px;font:400 15.6px/15.6px 'Liberation Sans';color:#cccccc;transform:scaleX(1.0388);transform-origin:0 0;">prep.html</div>
<div class="t" style="left:97.56px;top:374.09px;font:400 15.6px/15.6px 'Liberation Sans';color:#cccccc;transform:scaleX(0.9425);transform-origin:0 0;">README.md</div>
<div class="t" style="left:414.80px;top:269.62px;font:700 13.8px/13.8px 'Liberation Sans';color:#e2c08d;transform:scaleX(1.1091);transform-origin:0 0;">M</div>
<div class="t" style="left:82.00px;top:814.43px;font:700 13.2px/13.2px 'Liberation Sans';color:#cccccc;transform:scaleX(0.9556);transform-origin:0 0;">TIMELINE</div>
<div class="t" style="left:485.30px;top:49.99px;font:400 15.6px/15.6px 'Liberation Sans';color:#e2c08d;transform:scaleX(1.0060);transform-origin:0 0;">exercitii.html</div>
<div class="t" style="left:579.00px;top:51.52px;font:700 13.8px/13.8px 'Liberation Sans';color:#e2c08d;transform:scaleX(1.0909);transform-origin:0 0;">M</div>
<div class="t" style="left:663.98px;top:49.99px;font:400 15.6px/15.6px 'Liberation Sans';color:#9a9a9a;transform:scaleX(1.0172);transform-origin:0 0;">index.html</div>
<div class="t" style="left:492.50px;top:83.89px;font:400 15.6px/15.6px 'Liberation Sans';color:#b4b4b4;">exercitii.html</div>
<div class="t" style="left:620.93px;top:83.89px;font:400 15.6px/15.6px 'Liberation Sans';color:#b4b4b4;transform:scaleX(1.0716);transform-origin:0 0;">html</div>
<div class="t" style="left:694.46px;top:83.89px;font:400 15.6px/15.6px 'Liberation Sans';color:#b4b4b4;transform:scaleX(1.0449);transform-origin:0 0;">body</div>
<div class="t" style="left:770.95px;top:83.89px;font:400 15.6px/15.6px 'Liberation Sans';color:#b4b4b4;transform:scaleX(1.0459);transform-origin:0 0;">main</div>
<div class="t" style="left:469.62px;top:451.83px;font:400 13.2px/13.2px 'Liberation Sans';color:#9a9a9a;transform:scaleX(0.8794);transform-origin:0 0;">PROBLEMS</div>
<div class="t" style="left:558.50px;top:451.83px;font:400 13.2px/13.2px 'Liberation Sans';color:#9a9a9a;transform:scaleX(0.9140);transform-origin:0 0;">OUTPUT</div>
<div class="t" style="left:631.40px;top:451.83px;font:400 13.2px/13.2px 'Liberation Sans';color:#9a9a9a;transform:scaleX(0.8971);transform-origin:0 0;">DEBUG CONSOLE</div>
<div class="t" style="left:759.00px;top:451.83px;font:400 13.2px/13.2px 'Liberation Sans';color:#e7e7e7;transform:scaleX(0.9232);transform-origin:0 0;">TERMINAL</div>
<div class="t" style="left:1192.80px;top:450.99px;font:400 15.6px/15.6px 'Liberation Sans';color:#f0f0f0;transform:scaleX(0.9865);transform-origin:0 0;">2: bash</div>
<div class="t" style="left:71.80px;top:840.51px;font:400 14.4px/14.4px 'Liberation Sans';color:#ffffff;transform:scaleX(0.9684);transform-origin:0 0;">master*</div>
<div class="t" style="left:196.60px;top:840.81px;font:400 14.4px/14.4px 'Liberation Sans';color:#ffffff;transform:scaleX(0.9250);transform-origin:0 0;">0</div>
<div class="t" style="left:229.00px;top:840.81px;font:400 14.4px/14.4px 'Liberation Sans';color:#ffffff;transform:scaleX(0.9250);transform-origin:0 0;">0</div>
<div class="t" style="left:812.80px;top:840.81px;font:400 14.4px/14.4px 'Liberation Sans';color:#ffffff;transform:scaleX(0.9633);transform-origin:0 0;">You, seconds ago</div>
<div class="t" style="left:941.23px;top:840.81px;font:400 14.4px/14.4px 'Liberation Sans';color:#ffffff;transform:scaleX(0.9661);transform-origin:0 0;">Ln 60, Col 4</div>
<div class="t" style="left:1035.40px;top:840.81px;font:400 14.4px/14.4px 'Liberation Sans';color:#ffffff;transform:scaleX(0.9094);transform-origin:0 0;">Spaces: 2</div>
<div class="t" style="left:1112.36px;top:840.81px;font:400 14.4px/14.4px 'Liberation Sans';color:#ffffff;transform:scaleX(0.9380);transform-origin:0 0;">UTF-8</div>
<div class="t" style="left:1170.50px;top:840.81px;font:400 14.4px/14.4px 'Liberation Sans';color:#ffffff;transform:scaleX(0.8257);transform-origin:0 0;">CRLF</div>
<div class="t" style="left:1220.34px;top:840.81px;font:400 14.4px/14.4px 'Liberation Sans';color:#ffffff;transform:scaleX(0.9615);transform-origin:0 0;">HTML</div>
<div class="t" style="left:1298.30px;top:840.81px;font:400 14.4px/14.4px 'Liberation Sans';color:#ffffff;transform:scaleX(0.9316);transform-origin:0 0;">Go Live</div>
<div class="t" style="left:1384.61px;top:840.81px;font:400 14.4px/14.4px 'Liberation Sans';color:#ffffff;transform:scaleX(0.8937);transform-origin:0 0;">ESLint</div>
<div class="t" style="left:1463.31px;top:840.81px;font:400 14.4px/14.4px 'Liberation Sans';color:#ffffff;transform:scaleX(0.9914);transform-origin:0 0;">Prettier</div>
<div class="t" style="left:1450.39px;top:873.59px;font:400 12.3px/12.3px 'Liberation Sans';color:#ffffff;transform:scaleX(0.9050);transform-origin:0 0;">ENG</div>
<div class="t" style="left:1500.00px;top:864.29px;font:400 12.3px/12.3px 'Liberation Sans';color:#ffffff;transform:scaleX(0.8696);transform-origin:0 0;">20:43</div>
<div class="t" style="left:1487.00px;top:882.59px;font:400 12.3px/12.3px 'Liberation Sans';color:#ffffff;transform:scaleX(0.8622);transform-origin:0 0;">16.04.2021</div>
</body></html>
